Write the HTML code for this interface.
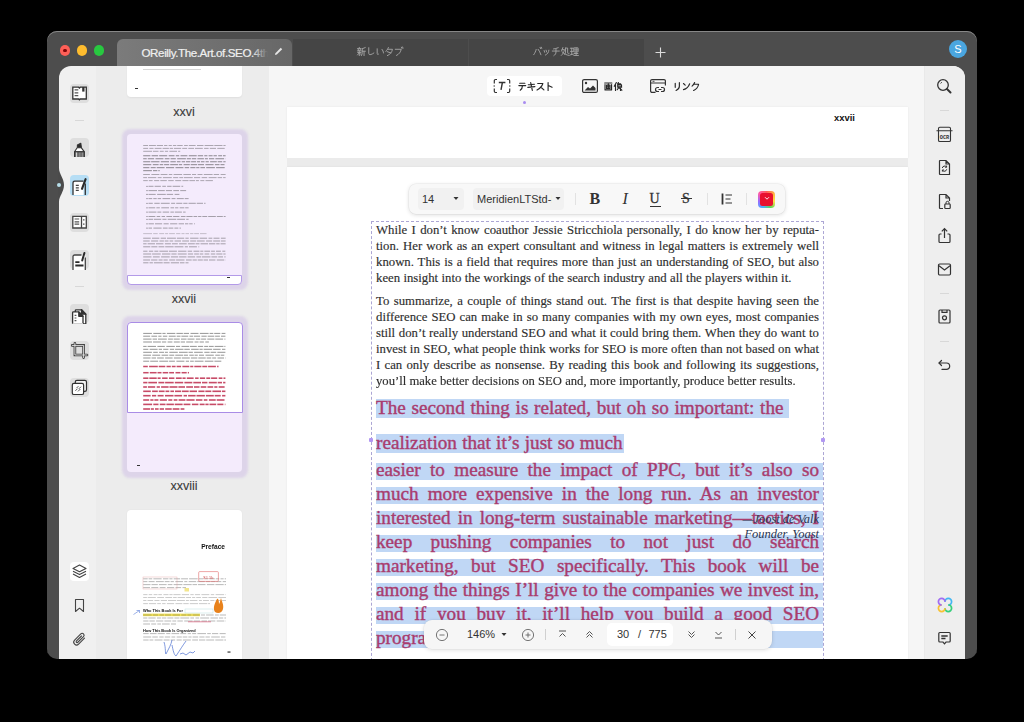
<!DOCTYPE html>
<html><head><meta charset="utf-8">
<style>
*{margin:0;padding:0;box-sizing:border-box}
html,body{width:1024px;height:722px;background:#000;overflow:hidden;font-family:"Liberation Sans",sans-serif}
.a{position:absolute}
#win{left:47px;top:31px;width:930px;height:628px;border-radius:10px;background:#4d4d4d;box-shadow:inset 0 1px 0 #878787;overflow:hidden}
.tl{width:10.6px;height:10.6px;border-radius:50%;top:45.3px}
.tab{top:39px;height:27px;border-radius:6px 6px 0 0;color:#a0a0a0;font-size:10px;text-align:center;line-height:26px}
#content{left:59px;top:66px;width:906px;height:593px;border-radius:12px 12px 0 0;background:#f0f0f0;overflow:hidden}
#thumbs{left:96px;top:66px;width:173px;height:593px;background:#ececec}
#main{left:269px;top:66px;width:656px;height:593px;background:#f6f6f6}
#rbar{left:925px;top:66px;width:40px;height:593px;background:#eeeeee;border-radius:0 12px 0 0;box-shadow:-1px 0 0 #e9e9e9}
.ib{width:19px;height:19px;border-radius:4px;background:#dedede;left:70px}
.sep{height:1px;background:#d8d8d8}
.page{background:#fff}
.lbl{color:#3a3a3a;font-size:12px;text-align:center;width:120px;left:124px;-webkit-text-stroke:0.1px #3a3a3a}
.tt{font-family:"Liberation Serif",serif;font-size:12.75px;color:#2e2e2e;-webkit-text-stroke:0.15px #2e2e2e;left:376px;width:443px;height:16px;line-height:16px;white-space:nowrap;text-align:justify;text-align-last:justify}
.tl2{text-align-last:left}
.hl{font-family:"Liberation Serif",serif;color:#a93c6e;-webkit-text-stroke:0.4px #a93c6e;left:376px;white-space:nowrap}
.hb{background:#c0d7f5;left:376px}
</style></head><body>
<div id="win" class="a"></div>
<div class="a tl" style="left:59.6px;background:#fe5f57"></div>
<div class="a" style="left:63px;top:48.7px;width:3.8px;height:3.8px;border-radius:50%;background:#7e0508"></div>
<div class="a tl" style="left:76.6px;background:#febc2e"></div>
<div class="a tl" style="left:93.6px;background:#28c840"></div>

<div class="a tab" style="left:117px;width:175px;background:linear-gradient(90deg,#7b7b7b,#676767);color:#f0f0f0;-webkit-text-stroke:0.2px #f0f0f0;font-size:11.6px;letter-spacing:-0.4px;text-align:left;padding-left:24.5px;line-height:27px">OReilly.The.Art.of.SEO.4th</div>
<div class="a" style="left:252px;top:42px;width:20px;height:20px;background:linear-gradient(90deg,rgba(106,106,106,0),#6a6a6a 80%)"></div>
<svg class="a" style="left:273px;top:46px" width="11" height="11" viewBox="0 0 11 11"><path d="M2 9 2.4 7.2 7.8 1.8 9.2 3.2 3.8 8.6Z" fill="#e6e6e6"/></svg>
<div class="a tab" style="left:293px;width:175px;background:#454545;border-radius:0"></div><svg class="a" style="left:356.0px;top:45.2px" width="48.5" height="12.8" fill="none" stroke="#a2a2a2" stroke-width="1.08" stroke-linecap="round" stroke-linejoin="round"><path transform="translate(1.00 2) scale(0.880)" d="M2.6 0.4V1.6M0.6 1.8H4.6M1.4 2.6L1.8 4M3.8 2.6L3.4 4M0.4 4.4H4.8M0.8 6.2H4.6M2.6 4.4V9.8M2.6 6.6L0.6 9M2.6 6.6L4.6 8.6M9.4 0.6L6 2M6 2V6.2C6 7.6 5.6 8.8 5 9.8M6 4.8H9.6M8 4.8V9.8"/><path transform="translate(10.30 2) scale(0.880)" d="M2.8 0.8V7.2C2.8 9.2 5 9.4 8.6 6.8"/><path transform="translate(19.60 2) scale(0.880)" d="M1.8 2V7.2C1.8 8.6 2.6 9 3.4 8M7.2 2.6C8.2 3.8 8.8 5.2 9 6.8"/><path transform="translate(28.90 2) scale(0.880)" d="M4 0.6C3.4 2.2 2.4 3.6 1 4.8M3.2 2.6H8.6C8 6 6 8.4 2.8 9.8M2.4 5.2L6.8 6.8"/><path transform="translate(38.20 2) scale(0.880)" d="M1.2 2.6H8C7.4 5.6 5.6 8.2 2.6 9.6M8.2 0.2L8.8 1.6M9.6 0L10 1.4"/></svg>
<div class="a tab" style="left:469px;width:175px;background:#454545;border-radius:0"></div><svg class="a" style="left:532.0px;top:45.4px" width="48.0" height="12.8" fill="none" stroke="#a2a2a2" stroke-width="1.08" stroke-linecap="round" stroke-linejoin="round"><path transform="translate(1.00 2) scale(0.880)" d="M3.6 2.8C3 5 2.2 7 0.8 8.8M5.8 2.6C7.2 4.4 8.2 6.4 9 8.8M8 0.4L8.6 1.8M9.4 0.2L9.9 1.6"/><path transform="translate(10.20 2) scale(0.880)" d="M2.2 4L2.8 6M4.4 3.6L5 5.6M7.6 3.6C7.4 6.2 6 8 3.6 9.2"/><path transform="translate(19.40 2) scale(0.880)" d="M7.8 0.8C6 1.6 4 2 2.4 2.2M1 4.6H9M5.2 2.2V5.6C5.2 7.6 4.4 8.8 2.8 9.8"/><path transform="translate(28.60 2) scale(0.880)" d="M2.6 0.6L1 4.6M1.8 3H4.4C3.8 5.8 2.6 8 0.8 9.6M1.8 5.6C3.8 7.8 6.6 9.2 9.8 9.6M5.6 1.2V5.8C5.6 7 5.2 7.8 4.6 8.4M5.6 1.2H8V6.6C8 7.2 8.4 7.4 9.6 7.2"/><path transform="translate(37.80 2) scale(0.880)" d="M0.6 1.4H4M0.8 5H3.8M2.2 1.4V8.4M0.4 9L4.2 8M5 1H9.4V5.6H5ZM5 3.3H9.4M7.2 1V9.4M5.2 7.4H9.2M4.6 9.6H9.8"/></svg>
<svg class="a" style="left:655px;top:47px" width="11" height="11"><path d="M5.5 0.5V10.5M0.5 5.5H10.5" stroke="#dcdcdc" stroke-width="1.1"/></svg>
<div class="a" style="left:949px;top:40px;width:18px;height:18px;border-radius:50%;background:#4aa6e0;color:#fff;font-size:11px;text-align:center;line-height:18px">S</div>

<div id="content" class="a"></div>
<div id="thumbs" class="a"></div>
<div id="main" class="a"></div>
<div id="rbar" class="a"></div>


<!-- left bar -->
<svg class="a" style="left:58px;top:168px" width="8" height="34" viewBox="0 0 8 34"><path d="M0 0H1C1 6 6 10 6 17C6 24 1 28 1 34H0Z" fill="#4b4b4b"/></svg>
<div class="a" style="left:56.5px;top:182.5px;width:4px;height:4px;border-radius:50%;background:#b6dde9"></div>
<div class="a ib" style="top:83.5px"></div>
<div class="a sep" style="left:75px;top:120px;width:9px"></div>
<div class="a ib" style="top:137.5px"></div>
<div class="a ib" style="top:174.5px;height:21px;background:#b6def5"></div>
<div class="a ib" style="top:212.5px"></div>
<div class="a ib" style="top:249.5px"></div>
<div class="a sep" style="left:75px;top:285.5px;width:9px"></div>
<div class="a ib" style="top:303.5px"></div>
<div class="a ib" style="top:341px"></div>
<div class="a ib" style="top:378px"></div>
<div class="a ib" style="top:562px;background:#fff"></div>

<svg class="a" style="left:70px;top:83.5px" width="19" height="19" viewBox="0 0 19 19" fill="none" stroke="#333" stroke-width="1.3">
<path d="M2.8 3.2H8.6L9.4 4 10.2 3.2H16.3V15H10.2L9.4 15.8 8.6 15H2.8Z" fill="#fff"/>
<path d="M4.6 5.9H8.3M4.6 8.9H8.3M4.6 11.6H8.3" stroke="#555" stroke-width="1.3"/><rect x="12.2" y="3" width="2.3" height="4.6" fill="#333" stroke="none"/></svg>
<svg class="a" style="left:70px;top:137.5px" width="19" height="19" viewBox="0 0 19 19" fill="none" stroke="#333" stroke-width="1.1" stroke-linejoin="round">
<path d="M7.4 6.9 10.8 5.2 11.4 9.6H7.4Z" fill="#2a2a2a"/><path d="M7.2 9.8H11.4L14.4 13.8H4.5Z" fill="#fff"/>
<path d="M4.5 13.8H14.4V19.5H4.5Z" fill="#6a6a6a" stroke="none"/><path d="M6.6 14.2V19.5" stroke="#ddd" stroke-width="1"/><path d="M9.8 14.2V19.5M12.4 14.2V19.5" stroke="#999" stroke-width="0.8"/><path d="M4.5 19.5V13.8H14.4V19.5" stroke-width="1"/></svg>
<svg class="a" style="left:70px;top:175px" width="19" height="20" viewBox="0 0 19 20" fill="none" stroke="#333" stroke-width="1.3">
<path d="M3 20V7.8A1.6 1.6 0 0 1 4.6 6.2H13.5V20Z" fill="#fff" stroke="none"/><path d="M3 20V7.8A1.6 1.6 0 0 1 4.6 6.2H13.5M15.3 8.5V20"/>
<path d="M5.8 10.3H8.8M5.8 12.8H8.8M5.8 15.4H8.8" stroke="#444" stroke-width="1.2"/><path d="M15.6 4.2 12 13.8" stroke="#2a2a2a" stroke-width="2.1" stroke-linecap="round"/></svg>
<svg class="a" style="left:70px;top:212.5px" width="19" height="19" viewBox="0 0 19 19" fill="none" stroke="#444" stroke-width="1.3">
<path d="M2.8 3.3H16.3V15H2.8Z" fill="#fff"/><path d="M11.5 3.3V15"/><path d="M4.6 6H9.2M4.6 8.8H9.2M4.6 11.2H9.2M13 6.9H14.5M13 11.1H14.5" stroke="#555" stroke-width="1.2"/></svg>
<svg class="a" style="left:70px;top:249.5px" width="19" height="20" viewBox="0 0 19 20" fill="none" stroke="#444" stroke-width="1.3">
<path d="M3 20V6.6A1.6 1.6 0 0 1 4.6 5H15.3V20Z" fill="#fff" stroke="none"/><path d="M3 20V6.6A1.6 1.6 0 0 1 4.6 5H11.5M15.3 7.5V20"/>
<path d="M5.3 12.2H9.5M5.3 15.5H13.5" stroke="#2a2a2a" stroke-width="1.8"/><path d="M14.4 3 12.2 10.5" stroke="#2a2a2a" stroke-width="2" stroke-linecap="round"/></svg>
<svg class="a" style="left:70px;top:303.5px" width="19" height="20" viewBox="0 0 19 20" fill="none" stroke="#333" stroke-width="1.3" stroke-linejoin="round">
<path d="M5.3 8V6.6A0.8 0.8 0 0 1 6.1 5.8H11.5L15.8 10.2V20H5.3Z" fill="#fff"/><path d="M11.5 5.8V10.2H15.8Z" fill="#333"/>
<path d="M2.6 20V8.7A0.8 0.8 0 0 1 3.4 7.9H8.8L13 12.3V20Z" fill="#fff"/><path d="M8.8 7.9V12.3H13Z" fill="#333"/><path d="M2.6 20H13" stroke="#fff" stroke-width="1.4"/>
<path d="M4.6 11.4H6.4M4.6 14H6.4M4.6 16.6H6.4" stroke="#555" stroke-width="1.1"/></svg>
<svg class="a" style="left:70px;top:341px" width="19" height="19" viewBox="0 0 19 19" fill="none" stroke-linecap="round">
<path d="M4.9 2.2V14H17M2.2 4.4H13.6V16.6" stroke="#3a3a3a" stroke-width="2.6"/><path d="M4.9 2.2V14H17M2.2 4.4H13.6V16.6" stroke="#e8e8e8" stroke-width="0.9"/></svg>
<svg class="a" style="left:70px;top:378px" width="19" height="19" viewBox="0 0 19 19" fill="none" stroke="#333" stroke-width="1.2">
<rect x="5.3" y="2.3" width="11.2" height="11" rx="1.6" fill="#f4f4f4"/><rect x="2.3" y="5.4" width="11.3" height="11.1" rx="1.6" fill="#fff"/>
<path d="M5.4 12.8 7.5 10.7M6.4 10.2 8.4 8.2M8 13.4 10.4 11M8.9 10.8 11 8.7" stroke="#555" stroke-width="1"/></svg>
<svg class="a" style="left:70px;top:562px" width="19" height="19" viewBox="0 0 19 19" fill="none" stroke="#444" stroke-width="1.1" stroke-linejoin="round">
<path d="M9.5 3 16 6.4 9.5 9.8 3 6.4Z"/><path d="M3 9.2 9.5 12.6 16 9.2"/><path d="M3 12 9.5 15.4 16 12"/></svg>
<svg class="a" style="left:70px;top:595.5px" width="19" height="19" viewBox="0 0 19 19" fill="none" stroke="#444" stroke-width="1.1" stroke-linejoin="round">
<path d="M5.5 3.5H13.5V15.5L9.5 12.2 5.5 15.5Z"/></svg>
<svg class="a" style="left:70px;top:630px" width="19" height="19" viewBox="0 0 19 19" fill="none" stroke="#444" stroke-width="1.1" stroke-linecap="round">
<path d="M14.5 8.2 8.6 14.1A2.8 2.8 0 0 1 4.6 10.1L10.8 3.9A1.9 1.9 0 0 1 13.5 6.6L7.6 12.5A0.95 0.95 0 0 1 6.3 11.2L11.5 6"/></svg>

<!-- thumbnails -->
<div class="a page" style="left:127px;top:66px;width:115px;height:31px;border-radius:0 0 4px 4px;box-shadow:0 1px 2px rgba(0,0,0,0.06)"></div>
<div class="a" style="left:143px;top:69px;width:58px;height:1px;background:#999;opacity:.4"></div>
<div class="a" style="left:134.5px;top:88px;width:3px;height:1.2px;background:#333"></div>
<div class="a lbl" style="top:105px;font-size:12.5px">xxvi</div>

<div class="a" style="left:121.5px;top:128.5px;width:126px;height:161px;border-radius:8px;background:#ddd4e9;filter:blur(1px)"></div>
<div class="a" style="left:127px;top:134px;width:115px;height:150px;border-radius:4px;background:#f4ebfc"></div>
<div class="a" style="left:127px;top:274.5px;width:115px;height:10px;border-radius:0 0 4px 4px;background:#fff;border:1.5px solid #b39ae8"></div>
<div class="a" style="left:227px;top:276.5px;width:3px;height:1.2px;background:#333"></div>
<div class="a lbl" style="top:292px;font-size:12.5px">xxvii</div>

<div class="a" style="left:121.5px;top:316px;width:126px;height:161.5px;border-radius:8px;background:#ddd4e9;filter:blur(1px)"></div>
<div class="a" style="left:127px;top:321.5px;width:115px;height:150.5px;border-radius:4px;background:#f4ebfc"></div>
<div class="a" style="left:126.5px;top:321.5px;width:116px;height:91.5px;border-radius:4px 4px 0 0;background:#fff;border:1.5px solid #a98ce6"></div>
<div class="a" style="left:136.5px;top:464.5px;width:3px;height:1.2px;background:#333"></div>
<div class="a lbl" style="top:479px;font-size:12.5px">xxviii</div>

<div class="a page" style="left:126.5px;top:510px;width:115px;height:149px;border-radius:4px 4px 0 0;box-shadow:0 0 2px rgba(0,0,0,0.05)"></div>
<svg class="a" style="left:0;top:0;clip-path:inset(66px 0 63px 0);filter:blur(0.4px)" width="1024" height="722"><rect x="143.2" y="145.00" width="4.9" height="1.0" fill="#444" opacity="0.41250000000000003"/><rect x="149.0" y="145.00" width="6.9" height="1.0" fill="#444" opacity="0.41250000000000003"/><rect x="156.8" y="145.00" width="6.2" height="1.0" fill="#444" opacity="0.41250000000000003"/><rect x="164.1" y="145.00" width="3.3" height="1.0" fill="#444" opacity="0.41250000000000003"/><rect x="168.6" y="145.00" width="3.2" height="1.0" fill="#444" opacity="0.41250000000000003"/><rect x="172.9" y="145.00" width="3.4" height="1.0" fill="#444" opacity="0.41250000000000003"/><rect x="177.2" y="145.00" width="5.5" height="1.0" fill="#444" opacity="0.41250000000000003"/><rect x="184.1" y="145.00" width="3.7" height="1.0" fill="#444" opacity="0.41250000000000003"/><rect x="188.8" y="145.00" width="6.8" height="1.0" fill="#444" opacity="0.41250000000000003"/><rect x="197.0" y="145.00" width="6.5" height="1.0" fill="#444" opacity="0.41250000000000003"/><rect x="204.6" y="145.00" width="8.9" height="1.0" fill="#444" opacity="0.41250000000000003"/><rect x="214.3" y="145.00" width="8.2" height="1.0" fill="#444" opacity="0.41250000000000003"/><rect x="223.4" y="145.00" width="2.2" height="1.0" fill="#444" opacity="0.41250000000000003"/><rect x="143.2" y="147.90" width="4.9" height="1.0" fill="#444" opacity="0.41250000000000003"/><rect x="149.4" y="147.90" width="4.1" height="1.0" fill="#444" opacity="0.41250000000000003"/><rect x="154.7" y="147.90" width="6.8" height="1.0" fill="#444" opacity="0.41250000000000003"/><rect x="162.6" y="147.90" width="6.3" height="1.0" fill="#444" opacity="0.41250000000000003"/><rect x="169.7" y="147.90" width="3.4" height="1.0" fill="#444" opacity="0.41250000000000003"/><rect x="174.0" y="147.90" width="7.1" height="1.0" fill="#444" opacity="0.41250000000000003"/><rect x="182.2" y="147.90" width="4.9" height="1.0" fill="#444" opacity="0.41250000000000003"/><rect x="188.3" y="147.90" width="5.7" height="1.0" fill="#444" opacity="0.41250000000000003"/><rect x="195.0" y="147.90" width="7.8" height="1.0" fill="#444" opacity="0.41250000000000003"/><rect x="204.1" y="147.90" width="4.5" height="1.0" fill="#444" opacity="0.41250000000000003"/><rect x="209.8" y="147.90" width="6.2" height="1.0" fill="#444" opacity="0.41250000000000003"/><rect x="217.3" y="147.90" width="7.4" height="1.0" fill="#444" opacity="0.41250000000000003"/><rect x="143.2" y="150.80" width="8.9" height="1.0" fill="#444" opacity="0.41250000000000003"/><rect x="153.0" y="150.80" width="5.5" height="1.0" fill="#444" opacity="0.41250000000000003"/><rect x="159.8" y="150.80" width="3.9" height="1.0" fill="#444" opacity="0.41250000000000003"/><rect x="164.9" y="150.80" width="3.2" height="1.0" fill="#444" opacity="0.41250000000000003"/><rect x="169.4" y="150.80" width="7.6" height="1.0" fill="#444" opacity="0.41250000000000003"/><rect x="178.1" y="150.80" width="2.1" height="1.0" fill="#444" opacity="0.41250000000000003"/><rect x="143.2" y="155.10" width="7.2" height="1.2" fill="#333" opacity="0.44999999999999996"/><rect x="151.6" y="155.10" width="6.5" height="1.2" fill="#333" opacity="0.44999999999999996"/><rect x="159.2" y="155.10" width="8.0" height="1.2" fill="#333" opacity="0.44999999999999996"/><rect x="168.7" y="155.10" width="5.8" height="1.2" fill="#333" opacity="0.44999999999999996"/><rect x="175.8" y="155.10" width="3.4" height="1.2" fill="#333" opacity="0.44999999999999996"/><rect x="180.5" y="155.10" width="6.9" height="1.2" fill="#333" opacity="0.44999999999999996"/><rect x="188.8" y="155.10" width="7.9" height="1.2" fill="#333" opacity="0.44999999999999996"/><rect x="197.8" y="155.10" width="5.3" height="1.2" fill="#333" opacity="0.44999999999999996"/><rect x="204.3" y="155.10" width="3.1" height="1.2" fill="#333" opacity="0.44999999999999996"/><rect x="208.6" y="155.10" width="4.0" height="1.2" fill="#333" opacity="0.44999999999999996"/><rect x="213.5" y="155.10" width="3.4" height="1.2" fill="#333" opacity="0.44999999999999996"/><rect x="218.2" y="155.10" width="3.8" height="1.2" fill="#333" opacity="0.44999999999999996"/><rect x="222.9" y="155.10" width="2.7" height="1.2" fill="#333" opacity="0.44999999999999996"/><rect x="143.2" y="158.10" width="3.5" height="1.2" fill="#333" opacity="0.44999999999999996"/><rect x="147.8" y="158.10" width="6.3" height="1.2" fill="#333" opacity="0.44999999999999996"/><rect x="155.5" y="158.10" width="7.9" height="1.2" fill="#333" opacity="0.44999999999999996"/><rect x="164.8" y="158.10" width="4.7" height="1.2" fill="#333" opacity="0.44999999999999996"/><rect x="170.6" y="158.10" width="5.2" height="1.2" fill="#333" opacity="0.44999999999999996"/><rect x="177.2" y="158.10" width="8.7" height="1.2" fill="#333" opacity="0.44999999999999996"/><rect x="186.8" y="158.10" width="4.1" height="1.2" fill="#333" opacity="0.44999999999999996"/><rect x="191.8" y="158.10" width="4.4" height="1.2" fill="#333" opacity="0.44999999999999996"/><rect x="197.4" y="158.10" width="6.5" height="1.2" fill="#333" opacity="0.44999999999999996"/><rect x="204.9" y="158.10" width="3.0" height="1.2" fill="#333" opacity="0.44999999999999996"/><rect x="209.0" y="158.10" width="5.2" height="1.2" fill="#333" opacity="0.44999999999999996"/><rect x="215.4" y="158.10" width="8.7" height="1.2" fill="#333" opacity="0.44999999999999996"/><rect x="225.4" y="158.10" width="0.2" height="1.2" fill="#333" opacity="0.44999999999999996"/><rect x="143.2" y="161.10" width="7.1" height="1.2" fill="#333" opacity="0.44999999999999996"/><rect x="151.1" y="161.10" width="8.4" height="1.2" fill="#333" opacity="0.44999999999999996"/><rect x="160.8" y="161.10" width="8.2" height="1.2" fill="#333" opacity="0.44999999999999996"/><rect x="170.4" y="161.10" width="5.4" height="1.2" fill="#333" opacity="0.44999999999999996"/><rect x="176.9" y="161.10" width="3.6" height="1.2" fill="#333" opacity="0.44999999999999996"/><rect x="181.7" y="161.10" width="3.4" height="1.2" fill="#333" opacity="0.44999999999999996"/><rect x="186.0" y="161.10" width="4.3" height="1.2" fill="#333" opacity="0.44999999999999996"/><rect x="191.1" y="161.10" width="5.0" height="1.2" fill="#333" opacity="0.44999999999999996"/><rect x="197.0" y="161.10" width="3.0" height="1.2" fill="#333" opacity="0.44999999999999996"/><rect x="200.9" y="161.10" width="3.6" height="1.2" fill="#333" opacity="0.44999999999999996"/><rect x="205.6" y="161.10" width="3.2" height="1.2" fill="#333" opacity="0.44999999999999996"/><rect x="210.1" y="161.10" width="6.7" height="1.2" fill="#333" opacity="0.44999999999999996"/><rect x="217.7" y="161.10" width="4.5" height="1.2" fill="#333" opacity="0.44999999999999996"/><rect x="223.3" y="161.10" width="2.3" height="1.2" fill="#333" opacity="0.44999999999999996"/><rect x="143.2" y="164.00" width="8.1" height="1.2" fill="#333" opacity="0.44999999999999996"/><rect x="152.8" y="164.00" width="5.8" height="1.2" fill="#333" opacity="0.44999999999999996"/><rect x="159.7" y="164.00" width="3.5" height="1.2" fill="#333" opacity="0.44999999999999996"/><rect x="164.1" y="164.00" width="5.1" height="1.2" fill="#333" opacity="0.44999999999999996"/><rect x="170.2" y="164.00" width="8.0" height="1.2" fill="#333" opacity="0.44999999999999996"/><rect x="179.0" y="164.00" width="3.1" height="1.2" fill="#333" opacity="0.44999999999999996"/><rect x="183.6" y="164.00" width="6.2" height="1.2" fill="#333" opacity="0.44999999999999996"/><rect x="190.7" y="164.00" width="6.3" height="1.2" fill="#333" opacity="0.44999999999999996"/><rect x="197.8" y="164.00" width="6.2" height="1.2" fill="#333" opacity="0.44999999999999996"/><rect x="205.4" y="164.00" width="8.2" height="1.2" fill="#333" opacity="0.44999999999999996"/><rect x="214.9" y="164.00" width="4.6" height="1.2" fill="#333" opacity="0.44999999999999996"/><rect x="220.5" y="164.00" width="4.0" height="1.2" fill="#333" opacity="0.44999999999999996"/><rect x="143.2" y="167.00" width="6.2" height="1.2" fill="#333" opacity="0.44999999999999996"/><rect x="150.7" y="167.00" width="5.0" height="1.2" fill="#333" opacity="0.44999999999999996"/><rect x="156.7" y="167.00" width="7.9" height="1.2" fill="#333" opacity="0.44999999999999996"/><rect x="166.0" y="167.00" width="8.1" height="1.2" fill="#333" opacity="0.44999999999999996"/><rect x="175.5" y="167.00" width="7.9" height="1.2" fill="#333" opacity="0.44999999999999996"/><rect x="184.7" y="167.00" width="4.4" height="1.2" fill="#333" opacity="0.44999999999999996"/><rect x="190.3" y="167.00" width="5.1" height="1.2" fill="#333" opacity="0.44999999999999996"/><rect x="196.2" y="167.00" width="3.2" height="1.2" fill="#333" opacity="0.44999999999999996"/><rect x="200.4" y="167.00" width="4.6" height="1.2" fill="#333" opacity="0.44999999999999996"/><rect x="206.2" y="167.00" width="8.7" height="1.2" fill="#333" opacity="0.44999999999999996"/><rect x="216.1" y="167.00" width="8.6" height="1.2" fill="#333" opacity="0.44999999999999996"/><rect x="143.2" y="170.00" width="8.7" height="1.2" fill="#333" opacity="0.44999999999999996"/><rect x="153.0" y="170.00" width="4.3" height="1.2" fill="#333" opacity="0.44999999999999996"/><rect x="158.3" y="170.00" width="1.4" height="1.2" fill="#333" opacity="0.44999999999999996"/><rect x="143.2" y="174.00" width="6.7" height="1.0" fill="#444" opacity="0.41250000000000003"/><rect x="151.4" y="174.00" width="8.0" height="1.0" fill="#444" opacity="0.41250000000000003"/><rect x="160.6" y="174.00" width="6.9" height="1.0" fill="#444" opacity="0.41250000000000003"/><rect x="168.8" y="174.00" width="3.5" height="1.0" fill="#444" opacity="0.41250000000000003"/><rect x="173.6" y="174.00" width="8.5" height="1.0" fill="#444" opacity="0.41250000000000003"/><rect x="183.4" y="174.00" width="7.5" height="1.0" fill="#444" opacity="0.41250000000000003"/><rect x="192.0" y="174.00" width="4.1" height="1.0" fill="#444" opacity="0.41250000000000003"/><rect x="197.5" y="174.00" width="5.0" height="1.0" fill="#444" opacity="0.41250000000000003"/><rect x="203.8" y="174.00" width="8.8" height="1.0" fill="#444" opacity="0.41250000000000003"/><rect x="213.7" y="174.00" width="5.4" height="1.0" fill="#444" opacity="0.41250000000000003"/><rect x="220.6" y="174.00" width="5.0" height="1.0" fill="#444" opacity="0.41250000000000003"/><rect x="143.2" y="177.10" width="3.8" height="1.0" fill="#444" opacity="0.41250000000000003"/><rect x="147.9" y="177.10" width="8.4" height="1.0" fill="#444" opacity="0.41250000000000003"/><rect x="157.7" y="177.10" width="3.9" height="1.0" fill="#444" opacity="0.41250000000000003"/><rect x="162.9" y="177.10" width="8.9" height="1.0" fill="#444" opacity="0.41250000000000003"/><rect x="173.1" y="177.10" width="5.1" height="1.0" fill="#444" opacity="0.41250000000000003"/><rect x="179.3" y="177.10" width="3.8" height="1.0" fill="#444" opacity="0.41250000000000003"/><rect x="183.9" y="177.10" width="8.8" height="1.0" fill="#444" opacity="0.41250000000000003"/><rect x="194.0" y="177.10" width="6.2" height="1.0" fill="#444" opacity="0.41250000000000003"/><rect x="201.6" y="177.10" width="5.6" height="1.0" fill="#444" opacity="0.41250000000000003"/><rect x="208.6" y="177.10" width="8.0" height="1.0" fill="#444" opacity="0.41250000000000003"/><rect x="217.6" y="177.10" width="4.5" height="1.0" fill="#444" opacity="0.41250000000000003"/><rect x="223.1" y="177.10" width="2.5" height="1.0" fill="#444" opacity="0.41250000000000003"/><rect x="143.2" y="180.10" width="4.6" height="1.0" fill="#444" opacity="0.41250000000000003"/><rect x="148.8" y="180.10" width="3.8" height="1.0" fill="#444" opacity="0.41250000000000003"/><rect x="154.1" y="180.10" width="5.1" height="1.0" fill="#444" opacity="0.41250000000000003"/><rect x="160.3" y="180.10" width="6.5" height="1.0" fill="#444" opacity="0.41250000000000003"/><rect x="168.2" y="180.10" width="5.5" height="1.0" fill="#444" opacity="0.41250000000000003"/><rect x="175.2" y="180.10" width="6.0" height="1.0" fill="#444" opacity="0.41250000000000003"/><rect x="182.4" y="180.10" width="6.1" height="1.0" fill="#444" opacity="0.41250000000000003"/><rect x="189.4" y="180.10" width="5.6" height="1.0" fill="#444" opacity="0.41250000000000003"/><rect x="195.9" y="180.10" width="3.0" height="1.0" fill="#444" opacity="0.41250000000000003"/><rect x="200.3" y="180.10" width="4.0" height="1.0" fill="#444" opacity="0.41250000000000003"/><rect x="205.5" y="180.10" width="7.4" height="1.0" fill="#444" opacity="0.41250000000000003"/><circle cx="147" cy="186.3" r="0.6" fill="#333" opacity="0.7"/><rect x="148.5" y="185.80" width="5.0" height="1.0" fill="#333" opacity="0.41250000000000003"/><rect x="154.6" y="185.80" width="6.3" height="1.0" fill="#333" opacity="0.41250000000000003"/><rect x="162.3" y="185.80" width="3.6" height="1.0" fill="#333" opacity="0.41250000000000003"/><rect x="167.1" y="185.80" width="4.5" height="1.0" fill="#333" opacity="0.41250000000000003"/><rect x="172.6" y="185.80" width="7.6" height="1.0" fill="#333" opacity="0.41250000000000003"/><rect x="181.4" y="185.80" width="1.8" height="1.0" fill="#333" opacity="0.41250000000000003"/><circle cx="147" cy="190.6" r="0.6" fill="#333" opacity="0.7"/><rect x="148.5" y="190.10" width="8.5" height="1.0" fill="#333" opacity="0.41250000000000003"/><rect x="158.1" y="190.10" width="6.7" height="1.0" fill="#333" opacity="0.41250000000000003"/><rect x="165.9" y="190.10" width="6.1" height="1.0" fill="#333" opacity="0.41250000000000003"/><rect x="173.3" y="190.10" width="5.7" height="1.0" fill="#333" opacity="0.41250000000000003"/><rect x="180.2" y="190.10" width="5.9" height="1.0" fill="#333" opacity="0.41250000000000003"/><circle cx="147" cy="194.4" r="0.6" fill="#333" opacity="0.7"/><rect x="148.5" y="193.90" width="7.2" height="1.0" fill="#333" opacity="0.41250000000000003"/><rect x="157.1" y="193.90" width="8.7" height="1.0" fill="#333" opacity="0.41250000000000003"/><rect x="166.7" y="193.90" width="6.4" height="1.0" fill="#333" opacity="0.41250000000000003"/><rect x="174.6" y="193.90" width="4.8" height="1.0" fill="#333" opacity="0.41250000000000003"/><circle cx="147" cy="198.6" r="0.6" fill="#333" opacity="0.7"/><rect x="148.5" y="198.10" width="3.7" height="1.0" fill="#333" opacity="0.41250000000000003"/><rect x="153.3" y="198.10" width="3.4" height="1.0" fill="#333" opacity="0.41250000000000003"/><rect x="157.7" y="198.10" width="3.4" height="1.0" fill="#333" opacity="0.41250000000000003"/><rect x="162.5" y="198.10" width="7.7" height="1.0" fill="#333" opacity="0.41250000000000003"/><rect x="171.6" y="198.10" width="3.9" height="1.0" fill="#333" opacity="0.41250000000000003"/><rect x="176.8" y="198.10" width="7.0" height="1.0" fill="#333" opacity="0.41250000000000003"/><rect x="184.7" y="198.10" width="3.9" height="1.0" fill="#333" opacity="0.41250000000000003"/><circle cx="147" cy="203.3" r="0.6" fill="#333" opacity="0.7"/><rect x="148.5" y="202.80" width="4.3" height="1.0" fill="#333" opacity="0.41250000000000003"/><rect x="154.3" y="202.80" width="5.4" height="1.0" fill="#333" opacity="0.41250000000000003"/><rect x="160.8" y="202.80" width="8.9" height="1.0" fill="#333" opacity="0.41250000000000003"/><rect x="171.1" y="202.80" width="4.0" height="1.0" fill="#333" opacity="0.41250000000000003"/><rect x="176.2" y="202.80" width="6.1" height="1.0" fill="#333" opacity="0.41250000000000003"/><rect x="183.3" y="202.80" width="4.2" height="1.0" fill="#333" opacity="0.41250000000000003"/><rect x="188.5" y="202.80" width="7.3" height="1.0" fill="#333" opacity="0.41250000000000003"/><rect x="196.7" y="202.80" width="6.3" height="1.0" fill="#333" opacity="0.41250000000000003"/><rect x="204.1" y="202.80" width="1.4" height="1.0" fill="#333" opacity="0.41250000000000003"/><circle cx="147" cy="207.8" r="0.6" fill="#333" opacity="0.7"/><rect x="148.5" y="207.30" width="6.7" height="1.0" fill="#333" opacity="0.41250000000000003"/><rect x="156.4" y="207.30" width="3.4" height="1.0" fill="#333" opacity="0.41250000000000003"/><rect x="161.3" y="207.30" width="7.7" height="1.0" fill="#333" opacity="0.41250000000000003"/><rect x="170.5" y="207.30" width="3.6" height="1.0" fill="#333" opacity="0.41250000000000003"/><rect x="175.1" y="207.30" width="3.2" height="1.0" fill="#333" opacity="0.41250000000000003"/><rect x="179.7" y="207.30" width="4.6" height="1.0" fill="#333" opacity="0.41250000000000003"/><rect x="185.2" y="207.30" width="3.4" height="1.0" fill="#333" opacity="0.41250000000000003"/><circle cx="147" cy="212.1" r="0.6" fill="#333" opacity="0.7"/><rect x="148.5" y="211.60" width="7.9" height="1.0" fill="#333" opacity="0.41250000000000003"/><rect x="157.4" y="211.60" width="3.9" height="1.0" fill="#333" opacity="0.41250000000000003"/><rect x="162.7" y="211.60" width="6.4" height="1.0" fill="#333" opacity="0.41250000000000003"/><rect x="170.4" y="211.60" width="3.5" height="1.0" fill="#333" opacity="0.41250000000000003"/><rect x="174.8" y="211.60" width="7.1" height="1.0" fill="#333" opacity="0.41250000000000003"/><rect x="183.1" y="211.60" width="2.5" height="1.0" fill="#333" opacity="0.41250000000000003"/><circle cx="147" cy="216.5" r="0.6" fill="#333" opacity="0.7"/><rect x="148.5" y="216.00" width="6.8" height="1.0" fill="#333" opacity="0.41250000000000003"/><rect x="156.7" y="216.00" width="3.5" height="1.0" fill="#333" opacity="0.41250000000000003"/><rect x="161.6" y="216.00" width="3.4" height="1.0" fill="#333" opacity="0.41250000000000003"/><rect x="166.4" y="216.00" width="5.7" height="1.0" fill="#333" opacity="0.41250000000000003"/><rect x="173.1" y="216.00" width="6.3" height="1.0" fill="#333" opacity="0.41250000000000003"/><rect x="180.9" y="216.00" width="4.6" height="1.0" fill="#333" opacity="0.41250000000000003"/><rect x="186.4" y="216.00" width="6.2" height="1.0" fill="#333" opacity="0.41250000000000003"/><rect x="193.5" y="216.00" width="3.7" height="1.0" fill="#333" opacity="0.41250000000000003"/><rect x="198.1" y="216.00" width="3.3" height="1.0" fill="#333" opacity="0.41250000000000003"/><rect x="202.3" y="216.00" width="4.9" height="1.0" fill="#333" opacity="0.41250000000000003"/><rect x="208.2" y="216.00" width="7.6" height="1.0" fill="#333" opacity="0.41250000000000003"/><rect x="216.8" y="216.00" width="6.0" height="1.0" fill="#333" opacity="0.41250000000000003"/><rect x="223.7" y="216.00" width="1.9" height="1.0" fill="#333" opacity="0.41250000000000003"/><circle cx="147" cy="219.3" r="0.6" fill="#333" opacity="0.7"/><rect x="148.5" y="218.80" width="4.5" height="1.0" fill="#333" opacity="0.41250000000000003"/><rect x="153.8" y="218.80" width="7.4" height="1.0" fill="#333" opacity="0.41250000000000003"/><rect x="162.4" y="218.80" width="4.1" height="1.0" fill="#333" opacity="0.41250000000000003"/><rect x="167.7" y="218.80" width="8.6" height="1.0" fill="#333" opacity="0.41250000000000003"/><rect x="177.1" y="218.80" width="7.9" height="1.0" fill="#333" opacity="0.41250000000000003"/><rect x="186.2" y="218.80" width="2.4" height="1.0" fill="#333" opacity="0.41250000000000003"/><circle cx="147" cy="223.8" r="0.6" fill="#333" opacity="0.7"/><rect x="148.5" y="223.30" width="5.4" height="1.0" fill="#333" opacity="0.41250000000000003"/><rect x="155.0" y="223.30" width="7.1" height="1.0" fill="#333" opacity="0.41250000000000003"/><rect x="163.6" y="223.30" width="5.1" height="1.0" fill="#333" opacity="0.41250000000000003"/><rect x="170.1" y="223.30" width="7.2" height="1.0" fill="#333" opacity="0.41250000000000003"/><rect x="178.6" y="223.30" width="5.4" height="1.0" fill="#333" opacity="0.41250000000000003"/><rect x="185.0" y="223.30" width="3.3" height="1.0" fill="#333" opacity="0.41250000000000003"/><rect x="189.2" y="223.30" width="3.4" height="1.0" fill="#333" opacity="0.41250000000000003"/><rect x="194.0" y="223.30" width="0.8" height="1.0" fill="#333" opacity="0.41250000000000003"/><circle cx="147" cy="228.1" r="0.6" fill="#333" opacity="0.7"/><rect x="148.5" y="227.60" width="3.5" height="1.0" fill="#333" opacity="0.41250000000000003"/><rect x="153.4" y="227.60" width="8.2" height="1.0" fill="#333" opacity="0.41250000000000003"/><rect x="162.9" y="227.60" width="4.7" height="1.0" fill="#333" opacity="0.41250000000000003"/><rect x="168.5" y="227.60" width="4.8" height="1.0" fill="#333" opacity="0.41250000000000003"/><rect x="174.4" y="227.60" width="3.9" height="1.0" fill="#333" opacity="0.41250000000000003"/><rect x="179.5" y="227.60" width="1.4" height="1.0" fill="#333" opacity="0.41250000000000003"/><rect x="143.2" y="233.10" width="8.8" height="1.0" fill="#555" opacity="0.30000000000000004"/><rect x="153.2" y="233.10" width="4.5" height="1.0" fill="#555" opacity="0.30000000000000004"/><rect x="159.2" y="233.10" width="4.9" height="1.0" fill="#555" opacity="0.30000000000000004"/><rect x="165.1" y="233.10" width="3.0" height="1.0" fill="#555" opacity="0.30000000000000004"/><rect x="169.1" y="233.10" width="5.8" height="1.0" fill="#555" opacity="0.30000000000000004"/><rect x="176.1" y="233.10" width="4.2" height="1.0" fill="#555" opacity="0.30000000000000004"/><rect x="181.5" y="233.10" width="3.0" height="1.0" fill="#555" opacity="0.30000000000000004"/><rect x="185.5" y="233.10" width="3.5" height="1.0" fill="#555" opacity="0.30000000000000004"/><rect x="190.1" y="233.10" width="3.3" height="1.0" fill="#555" opacity="0.30000000000000004"/><rect x="194.2" y="233.10" width="4.8" height="1.0" fill="#555" opacity="0.30000000000000004"/><rect x="200.0" y="233.10" width="6.5" height="1.0" fill="#555" opacity="0.30000000000000004"/><rect x="143.2" y="237.70" width="7.5" height="1.0" fill="#333" opacity="0.41250000000000003"/><rect x="152.0" y="237.70" width="7.3" height="1.0" fill="#333" opacity="0.41250000000000003"/><rect x="160.7" y="237.70" width="5.3" height="1.0" fill="#333" opacity="0.41250000000000003"/><rect x="167.0" y="237.70" width="8.9" height="1.0" fill="#333" opacity="0.41250000000000003"/><rect x="176.9" y="237.70" width="7.3" height="1.0" fill="#333" opacity="0.41250000000000003"/><rect x="185.4" y="237.70" width="3.3" height="1.0" fill="#333" opacity="0.41250000000000003"/><rect x="190.1" y="237.70" width="8.4" height="1.0" fill="#333" opacity="0.41250000000000003"/><rect x="199.7" y="237.70" width="7.4" height="1.0" fill="#333" opacity="0.41250000000000003"/><rect x="208.5" y="237.70" width="3.8" height="1.0" fill="#333" opacity="0.41250000000000003"/><rect x="213.5" y="237.70" width="6.0" height="1.0" fill="#333" opacity="0.41250000000000003"/><rect x="220.9" y="237.70" width="4.7" height="1.0" fill="#333" opacity="0.41250000000000003"/><rect x="143.2" y="240.50" width="6.5" height="1.0" fill="#333" opacity="0.41250000000000003"/><rect x="151.1" y="240.50" width="7.1" height="1.0" fill="#333" opacity="0.41250000000000003"/><rect x="159.5" y="240.50" width="4.4" height="1.0" fill="#333" opacity="0.41250000000000003"/><rect x="164.7" y="240.50" width="3.8" height="1.0" fill="#333" opacity="0.41250000000000003"/><rect x="169.6" y="240.50" width="3.6" height="1.0" fill="#333" opacity="0.41250000000000003"/><rect x="174.6" y="240.50" width="6.4" height="1.0" fill="#333" opacity="0.41250000000000003"/><rect x="182.2" y="240.50" width="6.8" height="1.0" fill="#333" opacity="0.41250000000000003"/><rect x="190.2" y="240.50" width="5.9" height="1.0" fill="#333" opacity="0.41250000000000003"/><rect x="196.9" y="240.50" width="7.8" height="1.0" fill="#333" opacity="0.41250000000000003"/><rect x="206.1" y="240.50" width="6.0" height="1.0" fill="#333" opacity="0.41250000000000003"/><rect x="213.2" y="240.50" width="7.0" height="1.0" fill="#333" opacity="0.41250000000000003"/><rect x="221.0" y="240.50" width="4.6" height="1.0" fill="#333" opacity="0.41250000000000003"/><rect x="143.2" y="243.30" width="3.4" height="1.0" fill="#333" opacity="0.41250000000000003"/><rect x="147.6" y="243.30" width="7.4" height="1.0" fill="#333" opacity="0.41250000000000003"/><rect x="156.0" y="243.30" width="7.4" height="1.0" fill="#333" opacity="0.41250000000000003"/><rect x="164.9" y="243.30" width="6.0" height="1.0" fill="#333" opacity="0.41250000000000003"/><rect x="171.9" y="243.30" width="5.9" height="1.0" fill="#333" opacity="0.41250000000000003"/><rect x="179.1" y="243.30" width="7.6" height="1.0" fill="#333" opacity="0.41250000000000003"/><rect x="187.9" y="243.30" width="6.9" height="1.0" fill="#333" opacity="0.41250000000000003"/><rect x="195.6" y="243.30" width="3.9" height="1.0" fill="#333" opacity="0.41250000000000003"/><rect x="200.5" y="243.30" width="7.5" height="1.0" fill="#333" opacity="0.41250000000000003"/><rect x="208.9" y="243.30" width="6.4" height="1.0" fill="#333" opacity="0.41250000000000003"/><rect x="216.2" y="243.30" width="3.4" height="1.0" fill="#333" opacity="0.41250000000000003"/><rect x="220.5" y="243.30" width="5.1" height="1.0" fill="#333" opacity="0.41250000000000003"/><rect x="143.2" y="246.30" width="7.1" height="1.0" fill="#333" opacity="0.41250000000000003"/><rect x="151.3" y="246.30" width="6.1" height="1.0" fill="#333" opacity="0.41250000000000003"/><rect x="158.5" y="246.30" width="5.8" height="1.0" fill="#333" opacity="0.41250000000000003"/><rect x="165.2" y="246.30" width="8.4" height="1.0" fill="#333" opacity="0.41250000000000003"/><rect x="174.5" y="246.30" width="8.9" height="1.0" fill="#333" opacity="0.41250000000000003"/><rect x="184.8" y="246.30" width="3.1" height="1.0" fill="#333" opacity="0.41250000000000003"/><rect x="189.0" y="246.30" width="7.9" height="1.0" fill="#333" opacity="0.41250000000000003"/><rect x="198.4" y="246.30" width="0.8" height="1.0" fill="#333" opacity="0.41250000000000003"/><rect x="143.2" y="250.70" width="4.3" height="1.0" fill="#333" opacity="0.41250000000000003"/><rect x="148.9" y="250.70" width="4.3" height="1.0" fill="#333" opacity="0.41250000000000003"/><rect x="154.4" y="250.70" width="3.9" height="1.0" fill="#333" opacity="0.41250000000000003"/><rect x="159.4" y="250.70" width="8.7" height="1.0" fill="#333" opacity="0.41250000000000003"/><rect x="169.0" y="250.70" width="7.9" height="1.0" fill="#333" opacity="0.41250000000000003"/><rect x="178.1" y="250.70" width="8.3" height="1.0" fill="#333" opacity="0.41250000000000003"/><rect x="187.7" y="250.70" width="4.4" height="1.0" fill="#333" opacity="0.41250000000000003"/><rect x="193.5" y="250.70" width="5.9" height="1.0" fill="#333" opacity="0.41250000000000003"/><rect x="200.3" y="250.70" width="3.0" height="1.0" fill="#333" opacity="0.41250000000000003"/><rect x="204.4" y="250.70" width="5.7" height="1.0" fill="#333" opacity="0.41250000000000003"/><rect x="211.1" y="250.70" width="3.8" height="1.0" fill="#333" opacity="0.41250000000000003"/><rect x="216.0" y="250.70" width="4.9" height="1.0" fill="#333" opacity="0.41250000000000003"/><rect x="222.3" y="250.70" width="3.0" height="1.0" fill="#333" opacity="0.41250000000000003"/><rect x="143.2" y="253.50" width="8.0" height="1.0" fill="#333" opacity="0.41250000000000003"/><rect x="152.1" y="253.50" width="8.6" height="1.0" fill="#333" opacity="0.41250000000000003"/><rect x="162.0" y="253.50" width="8.4" height="1.0" fill="#333" opacity="0.41250000000000003"/><rect x="171.4" y="253.50" width="5.2" height="1.0" fill="#333" opacity="0.41250000000000003"/><rect x="177.7" y="253.50" width="9.0" height="1.0" fill="#333" opacity="0.41250000000000003"/><rect x="187.9" y="253.50" width="5.2" height="1.0" fill="#333" opacity="0.41250000000000003"/><rect x="194.2" y="253.50" width="4.7" height="1.0" fill="#333" opacity="0.41250000000000003"/><rect x="199.7" y="253.50" width="3.6" height="1.0" fill="#333" opacity="0.41250000000000003"/><rect x="204.6" y="253.50" width="4.7" height="1.0" fill="#333" opacity="0.41250000000000003"/><rect x="210.8" y="253.50" width="4.5" height="1.0" fill="#333" opacity="0.41250000000000003"/><rect x="216.3" y="253.50" width="6.1" height="1.0" fill="#333" opacity="0.41250000000000003"/><rect x="223.3" y="253.50" width="2.3" height="1.0" fill="#333" opacity="0.41250000000000003"/><rect x="143.2" y="256.40" width="8.3" height="1.0" fill="#333" opacity="0.41250000000000003"/><rect x="152.9" y="256.40" width="6.8" height="1.0" fill="#333" opacity="0.41250000000000003"/><rect x="161.1" y="256.40" width="8.6" height="1.0" fill="#333" opacity="0.41250000000000003"/><rect x="170.9" y="256.40" width="7.3" height="1.0" fill="#333" opacity="0.41250000000000003"/><rect x="179.1" y="256.40" width="7.4" height="1.0" fill="#333" opacity="0.41250000000000003"/><rect x="187.6" y="256.40" width="7.5" height="1.0" fill="#333" opacity="0.41250000000000003"/><rect x="196.4" y="256.40" width="4.7" height="1.0" fill="#333" opacity="0.41250000000000003"/><rect x="201.9" y="256.40" width="8.6" height="1.0" fill="#333" opacity="0.41250000000000003"/><rect x="211.4" y="256.40" width="5.8" height="1.0" fill="#333" opacity="0.41250000000000003"/><rect x="218.2" y="256.40" width="4.8" height="1.0" fill="#333" opacity="0.41250000000000003"/><rect x="224.3" y="256.40" width="1.3" height="1.0" fill="#333" opacity="0.41250000000000003"/><rect x="143.2" y="259.50" width="6.9" height="1.0" fill="#333" opacity="0.41250000000000003"/><rect x="151.1" y="259.50" width="6.3" height="1.0" fill="#333" opacity="0.41250000000000003"/><rect x="158.6" y="259.50" width="4.0" height="1.0" fill="#333" opacity="0.41250000000000003"/><rect x="163.5" y="259.50" width="4.2" height="1.0" fill="#333" opacity="0.41250000000000003"/><rect x="169.2" y="259.50" width="6.0" height="1.0" fill="#333" opacity="0.41250000000000003"/><rect x="176.1" y="259.50" width="8.4" height="1.0" fill="#333" opacity="0.41250000000000003"/><rect x="186.0" y="259.50" width="5.7" height="1.0" fill="#333" opacity="0.41250000000000003"/><rect x="192.6" y="259.50" width="4.2" height="1.0" fill="#333" opacity="0.41250000000000003"/><rect x="197.7" y="259.50" width="5.1" height="1.0" fill="#333" opacity="0.41250000000000003"/><rect x="203.6" y="259.50" width="4.4" height="1.0" fill="#333" opacity="0.41250000000000003"/><rect x="209.0" y="259.50" width="6.4" height="1.0" fill="#333" opacity="0.41250000000000003"/><rect x="216.8" y="259.50" width="7.5" height="1.0" fill="#333" opacity="0.41250000000000003"/><rect x="225.4" y="259.50" width="0.2" height="1.0" fill="#333" opacity="0.41250000000000003"/><rect x="143.2" y="262.30" width="5.3" height="1.0" fill="#333" opacity="0.41250000000000003"/><rect x="149.5" y="262.30" width="3.4" height="1.0" fill="#333" opacity="0.41250000000000003"/><rect x="153.9" y="262.30" width="8.8" height="1.0" fill="#333" opacity="0.41250000000000003"/><rect x="163.6" y="262.30" width="6.0" height="1.0" fill="#333" opacity="0.41250000000000003"/><rect x="170.8" y="262.30" width="8.2" height="1.0" fill="#333" opacity="0.41250000000000003"/><rect x="179.9" y="262.30" width="4.6" height="1.0" fill="#333" opacity="0.41250000000000003"/><rect x="185.5" y="262.30" width="3.0" height="1.0" fill="#333" opacity="0.41250000000000003"/><rect x="143.2" y="332.90" width="8.7" height="1.0" fill="#444" opacity="0.5625"/><rect x="153.3" y="332.90" width="8.2" height="1.0" fill="#444" opacity="0.5625"/><rect x="162.4" y="332.90" width="3.2" height="1.0" fill="#444" opacity="0.5625"/><rect x="166.9" y="332.90" width="8.4" height="1.0" fill="#444" opacity="0.5625"/><rect x="176.4" y="332.90" width="6.5" height="1.0" fill="#444" opacity="0.5625"/><rect x="183.7" y="332.90" width="5.3" height="1.0" fill="#444" opacity="0.5625"/><rect x="190.5" y="332.90" width="8.0" height="1.0" fill="#444" opacity="0.5625"/><rect x="199.8" y="332.90" width="8.8" height="1.0" fill="#444" opacity="0.5625"/><rect x="209.6" y="332.90" width="3.7" height="1.0" fill="#444" opacity="0.5625"/><rect x="214.2" y="332.90" width="6.1" height="1.0" fill="#444" opacity="0.5625"/><rect x="221.6" y="332.90" width="3.8" height="1.0" fill="#444" opacity="0.5625"/><rect x="143.2" y="335.70" width="6.9" height="1.0" fill="#444" opacity="0.5625"/><rect x="151.4" y="335.70" width="5.7" height="1.0" fill="#444" opacity="0.5625"/><rect x="158.3" y="335.70" width="3.2" height="1.0" fill="#444" opacity="0.5625"/><rect x="162.9" y="335.70" width="4.4" height="1.0" fill="#444" opacity="0.5625"/><rect x="168.8" y="335.70" width="6.9" height="1.0" fill="#444" opacity="0.5625"/><rect x="176.7" y="335.70" width="3.8" height="1.0" fill="#444" opacity="0.5625"/><rect x="181.4" y="335.70" width="6.8" height="1.0" fill="#444" opacity="0.5625"/><rect x="189.5" y="335.70" width="3.7" height="1.0" fill="#444" opacity="0.5625"/><rect x="194.0" y="335.70" width="6.1" height="1.0" fill="#444" opacity="0.5625"/><rect x="201.4" y="335.70" width="5.3" height="1.0" fill="#444" opacity="0.5625"/><rect x="207.7" y="335.70" width="6.6" height="1.0" fill="#444" opacity="0.5625"/><rect x="215.1" y="335.70" width="4.8" height="1.0" fill="#444" opacity="0.5625"/><rect x="221.0" y="335.70" width="4.4" height="1.0" fill="#444" opacity="0.5625"/><rect x="143.2" y="338.60" width="8.3" height="1.0" fill="#444" opacity="0.5625"/><rect x="152.6" y="338.60" width="4.4" height="1.0" fill="#444" opacity="0.5625"/><rect x="158.0" y="338.60" width="8.8" height="1.0" fill="#444" opacity="0.5625"/><rect x="168.1" y="338.60" width="4.8" height="1.0" fill="#444" opacity="0.5625"/><rect x="173.7" y="338.60" width="6.0" height="1.0" fill="#444" opacity="0.5625"/><rect x="181.0" y="338.60" width="5.5" height="1.0" fill="#444" opacity="0.5625"/><rect x="187.5" y="338.60" width="7.0" height="1.0" fill="#444" opacity="0.5625"/><rect x="195.9" y="338.60" width="4.4" height="1.0" fill="#444" opacity="0.5625"/><rect x="201.1" y="338.60" width="5.0" height="1.0" fill="#444" opacity="0.5625"/><rect x="207.3" y="338.60" width="7.1" height="1.0" fill="#444" opacity="0.5625"/><rect x="215.3" y="338.60" width="7.8" height="1.0" fill="#444" opacity="0.5625"/><rect x="224.4" y="338.60" width="1.0" height="1.0" fill="#444" opacity="0.5625"/><rect x="143.2" y="341.50" width="8.8" height="1.0" fill="#444" opacity="0.5625"/><rect x="153.0" y="341.50" width="7.9" height="1.0" fill="#444" opacity="0.5625"/><rect x="161.9" y="341.50" width="4.3" height="1.0" fill="#444" opacity="0.5625"/><rect x="167.6" y="341.50" width="4.8" height="1.0" fill="#444" opacity="0.5625"/><rect x="173.8" y="341.50" width="6.0" height="1.0" fill="#444" opacity="0.5625"/><rect x="180.7" y="341.50" width="4.3" height="1.0" fill="#444" opacity="0.5625"/><rect x="186.2" y="341.50" width="7.0" height="1.0" fill="#444" opacity="0.5625"/><rect x="194.6" y="341.50" width="3.9" height="1.0" fill="#444" opacity="0.5625"/><rect x="199.6" y="341.50" width="4.3" height="1.0" fill="#444" opacity="0.5625"/><rect x="205.3" y="341.50" width="3.6" height="1.0" fill="#444" opacity="0.5625"/><rect x="143.2" y="345.90" width="3.4" height="1.0" fill="#444" opacity="0.5625"/><rect x="147.6" y="345.90" width="8.4" height="1.0" fill="#444" opacity="0.5625"/><rect x="157.4" y="345.90" width="7.4" height="1.0" fill="#444" opacity="0.5625"/><rect x="166.3" y="345.90" width="8.6" height="1.0" fill="#444" opacity="0.5625"/><rect x="176.0" y="345.90" width="4.1" height="1.0" fill="#444" opacity="0.5625"/><rect x="181.5" y="345.90" width="7.5" height="1.0" fill="#444" opacity="0.5625"/><rect x="189.8" y="345.90" width="7.0" height="1.0" fill="#444" opacity="0.5625"/><rect x="197.9" y="345.90" width="5.2" height="1.0" fill="#444" opacity="0.5625"/><rect x="204.2" y="345.90" width="4.0" height="1.0" fill="#444" opacity="0.5625"/><rect x="209.0" y="345.90" width="4.7" height="1.0" fill="#444" opacity="0.5625"/><rect x="214.7" y="345.90" width="8.7" height="1.0" fill="#444" opacity="0.5625"/><rect x="224.3" y="345.90" width="1.1" height="1.0" fill="#444" opacity="0.5625"/><rect x="143.2" y="348.80" width="5.1" height="1.0" fill="#444" opacity="0.5625"/><rect x="149.7" y="348.80" width="7.9" height="1.0" fill="#444" opacity="0.5625"/><rect x="158.7" y="348.80" width="3.3" height="1.0" fill="#444" opacity="0.5625"/><rect x="163.2" y="348.80" width="5.2" height="1.0" fill="#444" opacity="0.5625"/><rect x="169.9" y="348.80" width="4.2" height="1.0" fill="#444" opacity="0.5625"/><rect x="175.1" y="348.80" width="8.4" height="1.0" fill="#444" opacity="0.5625"/><rect x="184.3" y="348.80" width="5.5" height="1.0" fill="#444" opacity="0.5625"/><rect x="191.1" y="348.80" width="7.6" height="1.0" fill="#444" opacity="0.5625"/><rect x="199.5" y="348.80" width="3.2" height="1.0" fill="#444" opacity="0.5625"/><rect x="203.6" y="348.80" width="8.5" height="1.0" fill="#444" opacity="0.5625"/><rect x="213.1" y="348.80" width="7.5" height="1.0" fill="#444" opacity="0.5625"/><rect x="222.0" y="348.80" width="3.4" height="1.0" fill="#444" opacity="0.5625"/><rect x="143.2" y="351.80" width="8.7" height="1.0" fill="#444" opacity="0.5625"/><rect x="153.2" y="351.80" width="4.6" height="1.0" fill="#444" opacity="0.5625"/><rect x="159.1" y="351.80" width="4.9" height="1.0" fill="#444" opacity="0.5625"/><rect x="164.9" y="351.80" width="3.0" height="1.0" fill="#444" opacity="0.5625"/><rect x="169.3" y="351.80" width="8.5" height="1.0" fill="#444" opacity="0.5625"/><rect x="179.0" y="351.80" width="8.7" height="1.0" fill="#444" opacity="0.5625"/><rect x="188.5" y="351.80" width="4.4" height="1.0" fill="#444" opacity="0.5625"/><rect x="194.1" y="351.80" width="8.7" height="1.0" fill="#444" opacity="0.5625"/><rect x="204.3" y="351.80" width="5.3" height="1.0" fill="#444" opacity="0.5625"/><rect x="210.6" y="351.80" width="5.6" height="1.0" fill="#444" opacity="0.5625"/><rect x="217.3" y="351.80" width="8.1" height="1.0" fill="#444" opacity="0.5625"/><rect x="143.2" y="354.70" width="7.8" height="1.0" fill="#444" opacity="0.5625"/><rect x="152.3" y="354.70" width="7.9" height="1.0" fill="#444" opacity="0.5625"/><rect x="161.6" y="354.70" width="6.6" height="1.0" fill="#444" opacity="0.5625"/><rect x="169.3" y="354.70" width="4.9" height="1.0" fill="#444" opacity="0.5625"/><rect x="175.3" y="354.70" width="7.7" height="1.0" fill="#444" opacity="0.5625"/><rect x="183.8" y="354.70" width="4.2" height="1.0" fill="#444" opacity="0.5625"/><rect x="189.3" y="354.70" width="4.5" height="1.0" fill="#444" opacity="0.5625"/><rect x="194.6" y="354.70" width="3.2" height="1.0" fill="#444" opacity="0.5625"/><rect x="199.0" y="354.70" width="5.0" height="1.0" fill="#444" opacity="0.5625"/><rect x="205.5" y="354.70" width="8.3" height="1.0" fill="#444" opacity="0.5625"/><rect x="215.3" y="354.70" width="4.6" height="1.0" fill="#444" opacity="0.5625"/><rect x="220.7" y="354.70" width="3.6" height="1.0" fill="#444" opacity="0.5625"/><rect x="143.2" y="357.50" width="7.3" height="1.0" fill="#444" opacity="0.5625"/><rect x="151.6" y="357.50" width="4.4" height="1.0" fill="#444" opacity="0.5625"/><rect x="157.1" y="357.50" width="6.7" height="1.0" fill="#444" opacity="0.5625"/><rect x="165.1" y="357.50" width="7.5" height="1.0" fill="#444" opacity="0.5625"/><rect x="173.9" y="357.50" width="7.0" height="1.0" fill="#444" opacity="0.5625"/><rect x="181.8" y="357.50" width="8.0" height="1.0" fill="#444" opacity="0.5625"/><rect x="190.9" y="357.50" width="6.4" height="1.0" fill="#444" opacity="0.5625"/><rect x="198.3" y="357.50" width="7.4" height="1.0" fill="#444" opacity="0.5625"/><rect x="206.7" y="357.50" width="4.5" height="1.0" fill="#444" opacity="0.5625"/><rect x="212.2" y="357.50" width="3.9" height="1.0" fill="#444" opacity="0.5625"/><rect x="217.5" y="357.50" width="6.5" height="1.0" fill="#444" opacity="0.5625"/><rect x="225.0" y="357.50" width="0.4" height="1.0" fill="#444" opacity="0.5625"/><rect x="143.2" y="360.70" width="6.0" height="1.0" fill="#444" opacity="0.5625"/><rect x="150.2" y="360.70" width="7.9" height="1.0" fill="#444" opacity="0.5625"/><rect x="159.3" y="360.70" width="8.9" height="1.0" fill="#444" opacity="0.5625"/><rect x="169.1" y="360.70" width="5.8" height="1.0" fill="#444" opacity="0.5625"/><rect x="176.4" y="360.70" width="8.0" height="1.0" fill="#444" opacity="0.5625"/><rect x="185.8" y="360.70" width="3.2" height="1.0" fill="#444" opacity="0.5625"/><rect x="190.1" y="360.70" width="3.7" height="1.0" fill="#444" opacity="0.5625"/><rect x="194.7" y="360.70" width="8.8" height="1.0" fill="#444" opacity="0.5625"/><rect x="204.8" y="360.70" width="8.6" height="1.0" fill="#444" opacity="0.5625"/><rect x="214.4" y="360.70" width="6.9" height="1.0" fill="#444" opacity="0.5625"/><rect x="143.2" y="365.75" width="4.6" height="1.5" fill="#bb2446" opacity="0.8250000000000001"/><rect x="149.1" y="365.75" width="8.7" height="1.5" fill="#bb2446" opacity="0.8250000000000001"/><rect x="158.7" y="365.75" width="6.6" height="1.5" fill="#bb2446" opacity="0.8250000000000001"/><rect x="166.5" y="365.75" width="4.3" height="1.5" fill="#bb2446" opacity="0.8250000000000001"/><rect x="171.8" y="365.75" width="3.8" height="1.5" fill="#bb2446" opacity="0.8250000000000001"/><rect x="176.6" y="365.75" width="4.5" height="1.5" fill="#bb2446" opacity="0.8250000000000001"/><rect x="182.4" y="365.75" width="6.9" height="1.5" fill="#bb2446" opacity="0.8250000000000001"/><rect x="190.2" y="365.75" width="3.1" height="1.5" fill="#bb2446" opacity="0.8250000000000001"/><rect x="194.3" y="365.75" width="7.1" height="1.5" fill="#bb2446" opacity="0.8250000000000001"/><rect x="202.3" y="365.75" width="4.9" height="1.5" fill="#bb2446" opacity="0.8250000000000001"/><rect x="208.1" y="365.75" width="7.8" height="1.5" fill="#bb2446" opacity="0.8250000000000001"/><rect x="217.1" y="365.75" width="1.4" height="1.5" fill="#bb2446" opacity="0.8250000000000001"/><rect x="143.2" y="371.95" width="5.4" height="1.5" fill="#bb2446" opacity="0.8250000000000001"/><rect x="149.8" y="371.95" width="6.8" height="1.5" fill="#bb2446" opacity="0.8250000000000001"/><rect x="157.5" y="371.95" width="4.0" height="1.5" fill="#bb2446" opacity="0.8250000000000001"/><rect x="162.7" y="371.95" width="5.5" height="1.5" fill="#bb2446" opacity="0.8250000000000001"/><rect x="169.2" y="371.95" width="4.8" height="1.5" fill="#bb2446" opacity="0.8250000000000001"/><rect x="175.5" y="371.95" width="4.9" height="1.5" fill="#bb2446" opacity="0.8250000000000001"/><rect x="181.6" y="371.95" width="5.1" height="1.5" fill="#bb2446" opacity="0.8250000000000001"/><rect x="187.8" y="371.95" width="1.2" height="1.5" fill="#bb2446" opacity="0.8250000000000001"/><rect x="143.2" y="377.40" width="5.2" height="1.6" fill="#bb2446" opacity="0.8250000000000001"/><rect x="149.3" y="377.40" width="7.4" height="1.6" fill="#bb2446" opacity="0.8250000000000001"/><rect x="157.6" y="377.40" width="3.0" height="1.6" fill="#bb2446" opacity="0.8250000000000001"/><rect x="162.1" y="377.40" width="5.5" height="1.6" fill="#bb2446" opacity="0.8250000000000001"/><rect x="169.0" y="377.40" width="5.4" height="1.6" fill="#bb2446" opacity="0.8250000000000001"/><rect x="175.9" y="377.40" width="5.8" height="1.6" fill="#bb2446" opacity="0.8250000000000001"/><rect x="182.5" y="377.40" width="3.1" height="1.6" fill="#bb2446" opacity="0.8250000000000001"/><rect x="186.8" y="377.40" width="6.8" height="1.6" fill="#bb2446" opacity="0.8250000000000001"/><rect x="195.1" y="377.40" width="3.5" height="1.6" fill="#bb2446" opacity="0.8250000000000001"/><rect x="199.9" y="377.40" width="5.2" height="1.6" fill="#bb2446" opacity="0.8250000000000001"/><rect x="206.3" y="377.40" width="3.9" height="1.6" fill="#bb2446" opacity="0.8250000000000001"/><rect x="211.1" y="377.40" width="6.1" height="1.6" fill="#bb2446" opacity="0.8250000000000001"/><rect x="218.7" y="377.40" width="3.7" height="1.6" fill="#bb2446" opacity="0.8250000000000001"/><rect x="223.5" y="377.40" width="1.9" height="1.6" fill="#bb2446" opacity="0.8250000000000001"/><rect x="143.2" y="381.80" width="4.2" height="1.6" fill="#bb2446" opacity="0.8250000000000001"/><rect x="148.3" y="381.80" width="8.7" height="1.6" fill="#bb2446" opacity="0.8250000000000001"/><rect x="158.4" y="381.80" width="5.9" height="1.6" fill="#bb2446" opacity="0.8250000000000001"/><rect x="165.1" y="381.80" width="8.6" height="1.6" fill="#bb2446" opacity="0.8250000000000001"/><rect x="174.8" y="381.80" width="8.4" height="1.6" fill="#bb2446" opacity="0.8250000000000001"/><rect x="184.4" y="381.80" width="7.9" height="1.6" fill="#bb2446" opacity="0.8250000000000001"/><rect x="193.3" y="381.80" width="7.7" height="1.6" fill="#bb2446" opacity="0.8250000000000001"/><rect x="202.0" y="381.80" width="5.4" height="1.6" fill="#bb2446" opacity="0.8250000000000001"/><rect x="208.8" y="381.80" width="8.0" height="1.6" fill="#bb2446" opacity="0.8250000000000001"/><rect x="217.7" y="381.80" width="4.3" height="1.6" fill="#bb2446" opacity="0.8250000000000001"/><rect x="223.1" y="381.80" width="2.3" height="1.6" fill="#bb2446" opacity="0.8250000000000001"/><rect x="143.2" y="386.20" width="3.7" height="1.6" fill="#bb2446" opacity="0.8250000000000001"/><rect x="147.9" y="386.20" width="7.3" height="1.6" fill="#bb2446" opacity="0.8250000000000001"/><rect x="156.7" y="386.20" width="3.2" height="1.6" fill="#bb2446" opacity="0.8250000000000001"/><rect x="161.1" y="386.20" width="7.5" height="1.6" fill="#bb2446" opacity="0.8250000000000001"/><rect x="169.5" y="386.20" width="8.0" height="1.6" fill="#bb2446" opacity="0.8250000000000001"/><rect x="178.4" y="386.20" width="6.6" height="1.6" fill="#bb2446" opacity="0.8250000000000001"/><rect x="186.2" y="386.20" width="6.8" height="1.6" fill="#bb2446" opacity="0.8250000000000001"/><rect x="194.0" y="386.20" width="5.5" height="1.6" fill="#bb2446" opacity="0.8250000000000001"/><rect x="200.7" y="386.20" width="5.6" height="1.6" fill="#bb2446" opacity="0.8250000000000001"/><rect x="207.5" y="386.20" width="5.7" height="1.6" fill="#bb2446" opacity="0.8250000000000001"/><rect x="214.3" y="386.20" width="3.1" height="1.6" fill="#bb2446" opacity="0.8250000000000001"/><rect x="218.7" y="386.20" width="5.9" height="1.6" fill="#bb2446" opacity="0.8250000000000001"/><rect x="143.2" y="390.50" width="7.6" height="1.6" fill="#bb2446" opacity="0.8250000000000001"/><rect x="152.1" y="390.50" width="5.7" height="1.6" fill="#bb2446" opacity="0.8250000000000001"/><rect x="158.8" y="390.50" width="5.8" height="1.6" fill="#bb2446" opacity="0.8250000000000001"/><rect x="165.5" y="390.50" width="3.8" height="1.6" fill="#bb2446" opacity="0.8250000000000001"/><rect x="170.4" y="390.50" width="3.6" height="1.6" fill="#bb2446" opacity="0.8250000000000001"/><rect x="175.0" y="390.50" width="6.1" height="1.6" fill="#bb2446" opacity="0.8250000000000001"/><rect x="181.9" y="390.50" width="6.8" height="1.6" fill="#bb2446" opacity="0.8250000000000001"/><rect x="189.6" y="390.50" width="7.4" height="1.6" fill="#bb2446" opacity="0.8250000000000001"/><rect x="198.4" y="390.50" width="6.1" height="1.6" fill="#bb2446" opacity="0.8250000000000001"/><rect x="205.3" y="390.50" width="6.0" height="1.6" fill="#bb2446" opacity="0.8250000000000001"/><rect x="212.4" y="390.50" width="8.7" height="1.6" fill="#bb2446" opacity="0.8250000000000001"/><rect x="222.0" y="390.50" width="3.4" height="1.6" fill="#bb2446" opacity="0.8250000000000001"/><rect x="143.2" y="394.90" width="7.4" height="1.6" fill="#bb2446" opacity="0.8250000000000001"/><rect x="152.0" y="394.90" width="4.2" height="1.6" fill="#bb2446" opacity="0.8250000000000001"/><rect x="157.6" y="394.90" width="6.0" height="1.6" fill="#bb2446" opacity="0.8250000000000001"/><rect x="165.0" y="394.90" width="8.5" height="1.6" fill="#bb2446" opacity="0.8250000000000001"/><rect x="174.4" y="394.90" width="7.7" height="1.6" fill="#bb2446" opacity="0.8250000000000001"/><rect x="183.6" y="394.90" width="3.4" height="1.6" fill="#bb2446" opacity="0.8250000000000001"/><rect x="188.1" y="394.90" width="7.5" height="1.6" fill="#bb2446" opacity="0.8250000000000001"/><rect x="196.5" y="394.90" width="8.4" height="1.6" fill="#bb2446" opacity="0.8250000000000001"/><rect x="205.9" y="394.90" width="7.9" height="1.6" fill="#bb2446" opacity="0.8250000000000001"/><rect x="214.7" y="394.90" width="6.0" height="1.6" fill="#bb2446" opacity="0.8250000000000001"/><rect x="222.1" y="394.90" width="3.3" height="1.6" fill="#bb2446" opacity="0.8250000000000001"/><rect x="143.2" y="399.20" width="6.0" height="1.6" fill="#bb2446" opacity="0.8250000000000001"/><rect x="150.3" y="399.20" width="3.2" height="1.6" fill="#bb2446" opacity="0.8250000000000001"/><rect x="154.4" y="399.20" width="4.0" height="1.6" fill="#bb2446" opacity="0.8250000000000001"/><rect x="159.8" y="399.20" width="7.1" height="1.6" fill="#bb2446" opacity="0.8250000000000001"/><rect x="168.3" y="399.20" width="4.0" height="1.6" fill="#bb2446" opacity="0.8250000000000001"/><rect x="173.7" y="399.20" width="3.7" height="1.6" fill="#bb2446" opacity="0.8250000000000001"/><rect x="178.6" y="399.20" width="6.8" height="1.6" fill="#bb2446" opacity="0.8250000000000001"/><rect x="186.4" y="399.20" width="8.2" height="1.6" fill="#bb2446" opacity="0.8250000000000001"/><rect x="195.9" y="399.20" width="6.5" height="1.6" fill="#bb2446" opacity="0.8250000000000001"/><rect x="203.8" y="399.20" width="3.6" height="1.6" fill="#bb2446" opacity="0.8250000000000001"/><rect x="208.9" y="399.20" width="6.8" height="1.6" fill="#bb2446" opacity="0.8250000000000001"/><rect x="216.7" y="399.20" width="7.8" height="1.6" fill="#bb2446" opacity="0.8250000000000001"/><rect x="143.2" y="403.60" width="8.9" height="1.6" fill="#bb2446" opacity="0.8250000000000001"/><rect x="153.3" y="403.60" width="5.2" height="1.6" fill="#bb2446" opacity="0.8250000000000001"/><rect x="159.8" y="403.60" width="5.7" height="1.6" fill="#bb2446" opacity="0.8250000000000001"/><rect x="166.4" y="403.60" width="7.5" height="1.6" fill="#bb2446" opacity="0.8250000000000001"/><rect x="174.7" y="403.60" width="7.9" height="1.6" fill="#bb2446" opacity="0.8250000000000001"/><rect x="183.6" y="403.60" width="6.8" height="1.6" fill="#bb2446" opacity="0.8250000000000001"/><rect x="191.9" y="403.60" width="6.5" height="1.6" fill="#bb2446" opacity="0.8250000000000001"/><rect x="199.7" y="403.60" width="4.9" height="1.6" fill="#bb2446" opacity="0.8250000000000001"/><rect x="205.4" y="403.60" width="3.2" height="1.6" fill="#bb2446" opacity="0.8250000000000001"/><rect x="209.5" y="403.60" width="6.7" height="1.6" fill="#bb2446" opacity="0.8250000000000001"/><rect x="217.3" y="403.60" width="6.1" height="1.6" fill="#bb2446" opacity="0.8250000000000001"/><rect x="224.8" y="403.60" width="0.6" height="1.6" fill="#bb2446" opacity="0.8250000000000001"/><rect x="143.2" y="408.20" width="6.9" height="1.6" fill="#bb2446" opacity="0.8250000000000001"/><rect x="150.9" y="408.20" width="3.0" height="1.6" fill="#bb2446" opacity="0.8250000000000001"/><rect x="155.0" y="408.20" width="3.6" height="1.6" fill="#bb2446" opacity="0.8250000000000001"/><rect x="159.7" y="408.20" width="4.3" height="1.6" fill="#bb2446" opacity="0.8250000000000001"/><rect x="165.2" y="408.20" width="6.5" height="1.6" fill="#bb2446" opacity="0.8250000000000001"/><rect x="172.7" y="408.20" width="6.7" height="1.6" fill="#bb2446" opacity="0.8250000000000001"/><rect x="180.6" y="408.20" width="3.8" height="1.6" fill="#bb2446" opacity="0.8250000000000001"/><text x="225" y="548.5" font-family="Liberation Sans" font-weight="bold" font-size="6.6" text-anchor="end" fill="#111">Preface</text><rect x="143.2" y="578.30" width="4.5" height="1.0" fill="#444" opacity="0.375"/><rect x="148.6" y="578.30" width="3.6" height="1.0" fill="#444" opacity="0.375"/><rect x="153.4" y="578.30" width="8.2" height="1.0" fill="#444" opacity="0.375"/><rect x="163.0" y="578.30" width="5.4" height="1.0" fill="#444" opacity="0.375"/><rect x="169.4" y="578.30" width="3.1" height="1.0" fill="#444" opacity="0.375"/><rect x="173.7" y="578.30" width="6.4" height="1.0" fill="#444" opacity="0.375"/><rect x="181.1" y="578.30" width="6.9" height="1.0" fill="#444" opacity="0.375"/><rect x="189.1" y="578.30" width="8.6" height="1.0" fill="#444" opacity="0.375"/><rect x="199.0" y="578.30" width="4.5" height="1.0" fill="#444" opacity="0.375"/><rect x="204.9" y="578.30" width="3.3" height="1.0" fill="#444" opacity="0.375"/><rect x="209.4" y="578.30" width="5.4" height="1.0" fill="#444" opacity="0.375"/><rect x="215.8" y="578.30" width="3.4" height="1.0" fill="#444" opacity="0.375"/><rect x="220.5" y="578.30" width="3.1" height="1.0" fill="#444" opacity="0.375"/><rect x="224.7" y="578.30" width="1.3" height="1.0" fill="#444" opacity="0.375"/><rect x="143.2" y="581.10" width="4.2" height="1.0" fill="#444" opacity="0.375"/><rect x="148.6" y="581.10" width="6.0" height="1.0" fill="#444" opacity="0.375"/><rect x="155.9" y="581.10" width="7.9" height="1.0" fill="#444" opacity="0.375"/><rect x="164.7" y="581.10" width="4.9" height="1.0" fill="#444" opacity="0.375"/><rect x="170.6" y="581.10" width="3.3" height="1.0" fill="#444" opacity="0.375"/><rect x="175.3" y="581.10" width="7.7" height="1.0" fill="#444" opacity="0.375"/><rect x="184.3" y="581.10" width="3.0" height="1.0" fill="#444" opacity="0.375"/><rect x="188.7" y="581.10" width="7.5" height="1.0" fill="#444" opacity="0.375"/><rect x="197.3" y="581.10" width="7.5" height="1.0" fill="#444" opacity="0.375"/><rect x="205.9" y="581.10" width="4.4" height="1.0" fill="#444" opacity="0.375"/><rect x="211.1" y="581.10" width="4.4" height="1.0" fill="#444" opacity="0.375"/><rect x="216.3" y="581.10" width="5.0" height="1.0" fill="#444" opacity="0.375"/><rect x="222.7" y="581.10" width="3.3" height="1.0" fill="#444" opacity="0.375"/><rect x="143.2" y="584.10" width="7.3" height="1.0" fill="#444" opacity="0.375"/><rect x="151.5" y="584.10" width="6.3" height="1.0" fill="#444" opacity="0.375"/><rect x="158.9" y="584.10" width="7.7" height="1.0" fill="#444" opacity="0.375"/><rect x="167.8" y="584.10" width="4.6" height="1.0" fill="#444" opacity="0.375"/><rect x="173.6" y="584.10" width="8.8" height="1.0" fill="#444" opacity="0.375"/><rect x="183.4" y="584.10" width="8.3" height="1.0" fill="#444" opacity="0.375"/><rect x="192.5" y="584.10" width="4.6" height="1.0" fill="#444" opacity="0.375"/><rect x="198.0" y="584.10" width="7.5" height="1.0" fill="#444" opacity="0.375"/><rect x="206.9" y="584.10" width="7.5" height="1.0" fill="#444" opacity="0.375"/><rect x="215.4" y="584.10" width="8.3" height="1.0" fill="#444" opacity="0.375"/><rect x="224.7" y="584.10" width="1.3" height="1.0" fill="#444" opacity="0.375"/><rect x="143.2" y="587.10" width="6.8" height="1.0" fill="#444" opacity="0.375"/><rect x="151.3" y="587.10" width="7.0" height="1.0" fill="#444" opacity="0.375"/><rect x="159.7" y="587.10" width="5.8" height="1.0" fill="#444" opacity="0.375"/><rect x="167.0" y="587.10" width="7.2" height="1.0" fill="#444" opacity="0.375"/><rect x="175.5" y="587.10" width="5.6" height="1.0" fill="#444" opacity="0.375"/><rect x="182.5" y="587.10" width="3.5" height="1.0" fill="#444" opacity="0.375"/><rect x="143" y="577" width="34" height="12" fill="none" stroke="#e08080" stroke-width="0.4" opacity="0.7"/><rect x="198.7" y="571.6" width="19.7" height="9.8" rx="1" fill="none" stroke="#e06a6a" stroke-width="0.6"/><text x="208.5" y="578.6" font-family="Liberation Serif" font-size="4.6" text-anchor="middle" fill="#d04a4a">$1.5k</text><rect x="184.5" y="588" width="4.5" height="3.5" fill="#f0e070" opacity="0.8"/><rect x="143.2" y="594.10" width="4.3" height="1.0" fill="#555" opacity="0.30000000000000004"/><rect x="148.7" y="594.10" width="3.5" height="1.0" fill="#555" opacity="0.30000000000000004"/><rect x="153.6" y="594.10" width="3.9" height="1.0" fill="#555" opacity="0.30000000000000004"/><rect x="158.3" y="594.10" width="3.6" height="1.0" fill="#555" opacity="0.30000000000000004"/><rect x="163.4" y="594.10" width="5.1" height="1.0" fill="#555" opacity="0.30000000000000004"/><rect x="169.4" y="594.10" width="3.2" height="1.0" fill="#555" opacity="0.30000000000000004"/><rect x="173.4" y="594.10" width="7.2" height="1.0" fill="#555" opacity="0.30000000000000004"/><rect x="181.8" y="594.10" width="7.2" height="1.0" fill="#555" opacity="0.30000000000000004"/><rect x="190.3" y="594.10" width="3.4" height="1.0" fill="#555" opacity="0.30000000000000004"/><rect x="194.9" y="594.10" width="5.2" height="1.0" fill="#555" opacity="0.30000000000000004"/><rect x="201.4" y="594.10" width="7.9" height="1.0" fill="#555" opacity="0.30000000000000004"/><rect x="210.8" y="594.10" width="3.4" height="1.0" fill="#555" opacity="0.30000000000000004"/><rect x="215.6" y="594.10" width="8.5" height="1.0" fill="#555" opacity="0.30000000000000004"/><rect x="225.5" y="594.10" width="0.5" height="1.0" fill="#555" opacity="0.30000000000000004"/><rect x="143.2" y="597.00" width="3.7" height="1.0" fill="#555" opacity="0.30000000000000004"/><rect x="147.7" y="597.00" width="8.1" height="1.0" fill="#555" opacity="0.30000000000000004"/><rect x="157.2" y="597.00" width="6.8" height="1.0" fill="#555" opacity="0.30000000000000004"/><rect x="165.3" y="597.00" width="6.8" height="1.0" fill="#555" opacity="0.30000000000000004"/><rect x="173.1" y="597.00" width="3.6" height="1.0" fill="#555" opacity="0.30000000000000004"/><rect x="177.6" y="597.00" width="7.5" height="1.0" fill="#555" opacity="0.30000000000000004"/><rect x="186.1" y="597.00" width="4.9" height="1.0" fill="#555" opacity="0.30000000000000004"/><rect x="192.1" y="597.00" width="3.1" height="1.0" fill="#555" opacity="0.30000000000000004"/><rect x="196.2" y="597.00" width="4.7" height="1.0" fill="#555" opacity="0.30000000000000004"/><rect x="202.2" y="597.00" width="5.2" height="1.0" fill="#555" opacity="0.30000000000000004"/><rect x="208.4" y="597.00" width="8.8" height="1.0" fill="#555" opacity="0.30000000000000004"/><rect x="218.4" y="597.00" width="7.6" height="1.0" fill="#555" opacity="0.30000000000000004"/><rect x="143.2" y="600.00" width="3.2" height="1.0" fill="#555" opacity="0.30000000000000004"/><rect x="147.5" y="600.00" width="5.6" height="1.0" fill="#555" opacity="0.30000000000000004"/><rect x="154.4" y="600.00" width="5.1" height="1.0" fill="#555" opacity="0.30000000000000004"/><rect x="160.8" y="600.00" width="6.2" height="1.0" fill="#555" opacity="0.30000000000000004"/><rect x="168.0" y="600.00" width="8.2" height="1.0" fill="#555" opacity="0.30000000000000004"/><rect x="177.0" y="600.00" width="7.9" height="1.0" fill="#555" opacity="0.30000000000000004"/><rect x="185.9" y="600.00" width="3.0" height="1.0" fill="#555" opacity="0.30000000000000004"/><rect x="189.8" y="600.00" width="7.6" height="1.0" fill="#555" opacity="0.30000000000000004"/><rect x="198.9" y="600.00" width="3.0" height="1.0" fill="#555" opacity="0.30000000000000004"/><rect x="203.0" y="600.00" width="5.9" height="1.0" fill="#555" opacity="0.30000000000000004"/><rect x="210.3" y="600.00" width="4.1" height="1.0" fill="#555" opacity="0.30000000000000004"/><rect x="215.6" y="600.00" width="5.1" height="1.0" fill="#555" opacity="0.30000000000000004"/><rect x="222.1" y="600.00" width="3.9" height="1.0" fill="#555" opacity="0.30000000000000004"/><rect x="143.2" y="603.10" width="4.7" height="1.0" fill="#555" opacity="0.30000000000000004"/><rect x="148.9" y="603.10" width="7.2" height="1.0" fill="#555" opacity="0.30000000000000004"/><rect x="157.2" y="603.10" width="3.7" height="1.0" fill="#555" opacity="0.30000000000000004"/><rect x="162.1" y="603.10" width="3.5" height="1.0" fill="#555" opacity="0.30000000000000004"/><rect x="166.9" y="603.10" width="7.2" height="1.0" fill="#555" opacity="0.30000000000000004"/><rect x="175.5" y="603.10" width="6.8" height="1.0" fill="#555" opacity="0.30000000000000004"/><rect x="183.3" y="603.10" width="5.4" height="1.0" fill="#555" opacity="0.30000000000000004"/><rect x="189.8" y="603.10" width="8.3" height="1.0" fill="#555" opacity="0.30000000000000004"/><rect x="199.0" y="603.10" width="8.3" height="1.0" fill="#555" opacity="0.30000000000000004"/><rect x="208.1" y="603.10" width="1.9" height="1.0" fill="#555" opacity="0.30000000000000004"/><text x="143" y="612.3" font-family="Liberation Sans" font-weight="bold" font-size="3.9" fill="#111">Who This Book Is For</text><text x="143" y="632.3" font-family="Liberation Sans" font-weight="bold" font-size="3.9" fill="#111">How This Book Is Organized</text><path d="M133.5 614.5 139.5 610.5M136.5 610.5H139.5V613" stroke="#5a7ed8" stroke-width="0.6" fill="none"/><rect x="143" y="613.6" width="57" height="2.6" fill="#f3e35a"/><rect x="143.2" y="614.50" width="8.4" height="1.0" fill="#444" opacity="0.375"/><rect x="152.8" y="614.50" width="5.3" height="1.0" fill="#444" opacity="0.375"/><rect x="159.5" y="614.50" width="4.4" height="1.0" fill="#444" opacity="0.375"/><rect x="165.0" y="614.50" width="6.2" height="1.0" fill="#444" opacity="0.375"/><rect x="172.5" y="614.50" width="7.5" height="1.0" fill="#444" opacity="0.375"/><rect x="181.3" y="614.50" width="5.1" height="1.0" fill="#444" opacity="0.375"/><rect x="187.4" y="614.50" width="3.9" height="1.0" fill="#444" opacity="0.375"/><rect x="192.7" y="614.50" width="7.0" height="1.0" fill="#444" opacity="0.375"/><rect x="201.0" y="614.50" width="4.0" height="1.0" fill="#444" opacity="0.375"/><rect x="206.1" y="614.50" width="7.6" height="1.0" fill="#444" opacity="0.375"/><rect x="215.0" y="614.50" width="3.8" height="1.0" fill="#444" opacity="0.375"/><rect x="219.8" y="614.50" width="6.2" height="1.0" fill="#444" opacity="0.375"/><rect x="143.2" y="617.50" width="4.1" height="1.0" fill="#444" opacity="0.375"/><rect x="148.4" y="617.50" width="7.2" height="1.0" fill="#444" opacity="0.375"/><rect x="157.0" y="617.50" width="3.9" height="1.0" fill="#444" opacity="0.375"/><rect x="161.8" y="617.50" width="4.5" height="1.0" fill="#444" opacity="0.375"/><rect x="167.3" y="617.50" width="6.1" height="1.0" fill="#444" opacity="0.375"/><rect x="174.4" y="617.50" width="5.0" height="1.0" fill="#444" opacity="0.375"/><rect x="180.3" y="617.50" width="8.9" height="1.0" fill="#444" opacity="0.375"/><rect x="190.4" y="617.50" width="3.6" height="1.0" fill="#444" opacity="0.375"/><rect x="195.5" y="617.50" width="3.6" height="1.0" fill="#444" opacity="0.375"/><rect x="200.2" y="617.50" width="8.9" height="1.0" fill="#444" opacity="0.375"/><rect x="210.5" y="617.50" width="7.4" height="1.0" fill="#444" opacity="0.375"/><rect x="219.0" y="617.50" width="4.2" height="1.0" fill="#444" opacity="0.375"/><rect x="224.4" y="617.50" width="1.6" height="1.0" fill="#444" opacity="0.375"/><rect x="143.2" y="620.50" width="5.3" height="1.0" fill="#444" opacity="0.375"/><rect x="149.4" y="620.50" width="5.4" height="1.0" fill="#444" opacity="0.375"/><rect x="156.1" y="620.50" width="7.2" height="1.0" fill="#444" opacity="0.375"/><rect x="164.4" y="620.50" width="6.8" height="1.0" fill="#444" opacity="0.375"/><rect x="172.3" y="620.50" width="3.9" height="1.0" fill="#444" opacity="0.375"/><rect x="177.4" y="620.50" width="5.4" height="1.0" fill="#444" opacity="0.375"/><rect x="184.2" y="620.50" width="8.4" height="1.0" fill="#444" opacity="0.375"/><rect x="193.7" y="620.50" width="6.4" height="1.0" fill="#444" opacity="0.375"/><rect x="201.5" y="620.50" width="5.5" height="1.0" fill="#444" opacity="0.375"/><rect x="208.0" y="620.50" width="7.3" height="1.0" fill="#444" opacity="0.375"/><rect x="216.7" y="620.50" width="7.6" height="1.0" fill="#444" opacity="0.375"/><rect x="225.6" y="620.50" width="0.4" height="1.0" fill="#444" opacity="0.375"/><rect x="143.2" y="623.50" width="6.8" height="1.0" fill="#444" opacity="0.375"/><rect x="151.2" y="623.50" width="4.9" height="1.0" fill="#444" opacity="0.375"/><rect x="157.3" y="623.50" width="3.6" height="1.0" fill="#444" opacity="0.375"/><rect x="162.0" y="623.50" width="7.7" height="1.0" fill="#444" opacity="0.375"/><rect x="171.0" y="623.50" width="5.0" height="1.0" fill="#444" opacity="0.375"/><path d="M188 621.8H211" stroke="#d04060" stroke-width="0.6"/><rect x="185" y="609" width="28" height="4" fill="none" stroke="#9ed0d0" stroke-width="0.35"/><rect x="143.2" y="633.10" width="5.5" height="1.0" fill="#444" opacity="0.375"/><rect x="149.9" y="633.10" width="6.7" height="1.0" fill="#444" opacity="0.375"/><rect x="157.7" y="633.10" width="7.1" height="1.0" fill="#444" opacity="0.375"/><rect x="166.2" y="633.10" width="4.1" height="1.0" fill="#444" opacity="0.375"/><rect x="171.5" y="633.10" width="7.7" height="1.0" fill="#444" opacity="0.375"/><rect x="180.3" y="633.10" width="5.9" height="1.0" fill="#444" opacity="0.375"/><rect x="187.7" y="633.10" width="3.2" height="1.0" fill="#444" opacity="0.375"/><rect x="192.1" y="633.10" width="4.0" height="1.0" fill="#444" opacity="0.375"/><rect x="197.4" y="633.10" width="8.6" height="1.0" fill="#444" opacity="0.375"/><rect x="207.2" y="633.10" width="3.6" height="1.0" fill="#444" opacity="0.375"/><rect x="212.0" y="633.10" width="6.2" height="1.0" fill="#444" opacity="0.375"/><rect x="219.6" y="633.10" width="6.1" height="1.0" fill="#444" opacity="0.375"/><rect x="143.2" y="636.50" width="8.0" height="1.0" fill="#444" opacity="0.375"/><rect x="152.3" y="636.50" width="5.5" height="1.0" fill="#444" opacity="0.375"/><rect x="159.3" y="636.50" width="4.3" height="1.0" fill="#444" opacity="0.375"/><rect x="164.8" y="636.50" width="5.4" height="1.0" fill="#444" opacity="0.375"/><rect x="171.5" y="636.50" width="3.7" height="1.0" fill="#444" opacity="0.375"/><rect x="176.7" y="636.50" width="5.1" height="1.0" fill="#444" opacity="0.375"/><rect x="182.7" y="636.50" width="4.6" height="1.0" fill="#444" opacity="0.375"/><rect x="188.4" y="636.50" width="3.1" height="1.0" fill="#444" opacity="0.375"/><rect x="192.6" y="636.50" width="5.5" height="1.0" fill="#444" opacity="0.375"/><rect x="199.4" y="636.50" width="5.1" height="1.0" fill="#444" opacity="0.375"/><rect x="205.5" y="636.50" width="4.3" height="1.0" fill="#444" opacity="0.375"/><rect x="211.2" y="636.50" width="8.6" height="1.0" fill="#444" opacity="0.375"/><rect x="221.0" y="636.50" width="4.3" height="1.0" fill="#444" opacity="0.375"/><rect x="143.2" y="639.50" width="5.4" height="1.0" fill="#444" opacity="0.375"/><rect x="149.5" y="639.50" width="3.8" height="1.0" fill="#444" opacity="0.375"/><rect x="154.6" y="639.50" width="7.9" height="1.0" fill="#444" opacity="0.375"/><rect x="163.7" y="639.50" width="5.8" height="1.0" fill="#444" opacity="0.375"/><rect x="170.7" y="639.50" width="4.4" height="1.0" fill="#444" opacity="0.375"/><rect x="176.6" y="639.50" width="5.1" height="1.0" fill="#444" opacity="0.375"/><rect x="182.9" y="639.50" width="7.9" height="1.0" fill="#444" opacity="0.375"/><rect x="192.2" y="639.50" width="5.8" height="1.0" fill="#444" opacity="0.375"/><rect x="199.0" y="639.50" width="6.3" height="1.0" fill="#444" opacity="0.375"/><rect x="206.2" y="639.50" width="8.0" height="1.0" fill="#444" opacity="0.375"/><rect x="215.3" y="639.50" width="8.1" height="1.0" fill="#444" opacity="0.375"/><rect x="224.3" y="639.50" width="1.7" height="1.0" fill="#444" opacity="0.375"/><path d="M164 642C166 648 165 654 166 654C169 648 171 645 172 640M172 645C173 650 174 655 176 656C180 650 183 645 186 641M180 654 183 653 186 655 190 652 193 653 195 651" stroke="#4a6ed0" stroke-width="0.7" fill="none"/><path d="M216 601C214 605 213 609 215 612C218 614 222 613 223 609C224 605 222 602 221 598C220 601 220 603 219 604C219 600 218 598 217 599Z" fill="#e8821c"/><rect x="227.5" y="651.5" width="3" height="1.1" fill="#222"/></svg>

<!-- main -->
<div class="a" style="left:487px;top:76px;width:75px;height:20px;border-radius:4px;background:#fff"></div>
<svg class="a" style="left:493px;top:78px" width="18" height="16" viewBox="0 0 18 16" fill="none" stroke="#333" stroke-width="1.2">
<path d="M4 1.5H2.5A1.2 1.2 0 0 0 1.3 2.7V5.5M1.3 10.5V13.3A1.2 1.2 0 0 0 2.5 14.5H4M14 1.5H15.5A1.2 1.2 0 0 1 16.7 2.7V5.5M16.7 10.5V13.3A1.2 1.2 0 0 1 15.5 14.5H14M0.5 8H2M16 8H17.5"/>
<path d="M5.8 4.5H12.4M9.4 4.5 8 11.8" stroke-width="1.4"/></svg>
<svg class="a" style="left:516.5px;top:79.9px" width="38.0" height="12.6" fill="none" stroke="#262626" stroke-width="1.34" stroke-linecap="round" stroke-linejoin="round"><path transform="translate(1.00 2) scale(0.860)" d="M2 1.5H8M1 4.2H9M5.2 4.2C5.2 6.8 4.4 8.4 2.6 9.6"/><path transform="translate(10.00 2) scale(0.860)" d="M1.5 3.2L8.6 2.6M1 6.2L9.2 5.4M4.3 0.6L6.2 9.8"/><path transform="translate(19.00 2) scale(0.860)" d="M2 1.8H8C7 4.8 4.8 7.6 1.2 9.4M5.4 5.8L9.2 9.2"/><path transform="translate(28.00 2) scale(0.860)" d="M3.6 0.6V9.8M3.8 4L8.2 6.2"/></svg>
<div class="a" style="left:522.5px;top:100.5px;width:3px;height:3px;border-radius:50%;background:#a98cf0"></div>
<svg class="a" style="left:581px;top:78px" width="18" height="16" viewBox="0 0 18 16" fill="none" stroke="#333" stroke-width="1.2">
<rect x="1.6" y="1.6" width="14.8" height="12.8" rx="1.5"/><circle cx="5" cy="5" r="1.2" fill="#333" stroke="none"/><path d="M3.5 12.5 7 9 9 10.5 12 7.5 14.5 10V12.5Z" fill="#333" stroke="none"/></svg>
<svg class="a" style="left:603.0px;top:79.9px" width="21.2" height="12.6" fill="none" stroke="#262626" stroke-width="1.34" stroke-linecap="round" stroke-linejoin="round"><path transform="translate(1.00 2) scale(0.860)" d="M0.8 1.2H9.2M1.2 3V9.2H8.8V3M3 3.6V7.6H7V3.6ZM5 2.4V7.6M3 5.6H7"/><path transform="translate(10.60 2) scale(0.860)" d="M3.2 0.6L0.8 5M2.2 3.4V9.8M5.6 0.6L4.8 2M4.6 2.2H8.2L7.4 3.2M4.8 3.4H9.2V5.6H4.8ZM5 6.4L9.4 6M6.4 5.8L4.2 9M6.8 7L9.6 9.6M8 6.4V9.8"/></svg>
<svg class="a" style="left:649px;top:78px" width="18" height="16" viewBox="0 0 18 16" fill="none" stroke="#333" stroke-width="1.2">
<path d="M6.5 14.4H3A1.4 1.4 0 0 1 1.6 13V3A1.4 1.4 0 0 1 3 1.6H15A1.4 1.4 0 0 1 16.4 3V7.5M1.6 5H16.4"/><path d="M3.5 3.3H5.5" stroke-width="0.9"/><path d="M10 9.5H8.5A2 2 0 0 0 8.5 13.5H10M12 9.5H13.5A2 2 0 0 1 13.5 13.5H12M9.5 11.5H12.5"/></svg>
<svg class="a" style="left:672.0px;top:79.9px" width="29.3" height="12.6" fill="none" stroke="#262626" stroke-width="1.34" stroke-linecap="round" stroke-linejoin="round"><path transform="translate(1.00 2) scale(0.860)" d="M2.6 1.4V6.2M7.4 0.8V5C7.4 7.2 6 8.8 3.6 9.8"/><path transform="translate(10.10 2) scale(0.860)" d="M1.6 1.8L3.6 3.6M1.6 8.8C5 8 7.4 5.8 8.8 2"/><path transform="translate(19.20 2) scale(0.860)" d="M4 0.6C3.4 2.2 2.4 3.6 1 4.8M3.2 2.6H8.6C8 6 6 8.4 2.8 9.8"/></svg>

<div class="a page" style="left:287px;top:107px;width:620.5px;height:50.5px;box-shadow:0 0 2px rgba(0,0,0,0.07)"></div>
<div class="a" style="left:287px;top:157.5px;width:620.5px;height:9.5px;background:#ebebeb"></div>
<div class="a" style="left:834px;top:112px;font-size:9.4px;font-weight:bold;color:#111;line-height:12px">xxvii</div>
<div class="a page" style="left:287px;top:167px;width:620.5px;height:492px;box-shadow:0 0 2px rgba(0,0,0,0.07)"></div>

<!-- text -->
<div class="a" style="left:371px;top:220.5px;width:452.5px;height:450px;border:1px dashed #aca6d4"></div>
<div class="a tt" style="top:222.2px">While I don’t know coauthor Jessie Stricchiola personally, I do know her by reputa-</div>
<div class="a tt" style="top:238.0px">tion. Her work as an expert consultant and witness in legal matters is extremely well</div>
<div class="a tt" style="top:253.9px">known. This is a field that requires more than just an understanding of SEO, but also</div>
<div class="a tt" style="top:269.7px;width:415.4px">keen insight into the workings of the search industry and all the players within it.</div>
<div class="a tt" style="top:293.3px">To summarize, a couple of things stand out. The first is that despite having seen the</div>
<div class="a tt" style="top:309.2px">difference SEO can make in so many companies with my own eyes, most companies</div>
<div class="a tt" style="top:325.1px">still don’t really understand SEO and what it could bring them. When they do want to</div>
<div class="a tt" style="top:341.0px">invest in SEO, what people think works for SEO is more often than not based on what</div>
<div class="a tt" style="top:356.9px">I can only describe as nonsense. By reading this book and following its suggestions,</div>
<div class="a tt" style="top:372.8px;width:420px">you’ll make better decisions on SEO and, more importantly, produce better results.</div>

<!-- highlighted -->
<div class="a hb" style="top:399.1px;width:413px;height:18.69999999999999px"></div>
<div class="a hb" style="top:434.4px;width:247.5px;height:18.5px"></div>
<div class="a hb" style="top:462.5px;width:447px;height:17.5px"></div>
<div class="a hb" style="top:486.5px;width:447px;height:17.5px"></div>
<div class="a hb" style="top:510.5px;width:447px;height:17.5px"></div>
<div class="a hb" style="top:534.5px;width:447px;height:17.5px"></div>
<div class="a hb" style="top:558.5px;width:447px;height:17.5px"></div>
<div class="a hb" style="top:582.5px;width:447px;height:17.5px"></div>
<div class="a hb" style="top:606.5px;width:447px;height:17.5px"></div>
<div class="a hb" style="top:630.5px;width:447px;height:17.5px"></div>
<div class="a hl" style="top:396.5px;width:407.5px;text-align:justify;text-align-last:justify;font-size:19.2px;line-height:22px">The second thing is related, but oh so important: the</div>
<div class="a hl" style="top:431.6px;width:246.5px;text-align:justify;text-align-last:justify;font-size:19.2px;line-height:22px">realization that it’s just so much</div>
<div class="a hl" style="top:459.0px;width:443px;text-align:justify;text-align-last:justify;font-size:19.2px;line-height:22px">easier to measure the impact of PPC, but it’s also so</div>
<div class="a hl" style="top:483.0px;width:443px;text-align:justify;text-align-last:justify;font-size:19.2px;line-height:22px">much more expensive in the long run. As an investor</div>
<div class="a hl" style="top:507.0px;width:443px;text-align:justify;text-align-last:justify;font-size:19.2px;line-height:22px">interested in long-term sustainable marketing—tactics, I</div>
<div class="a hl" style="top:531.0px;width:443px;text-align:justify;text-align-last:justify;font-size:19.2px;line-height:22px">keep pushing companies to not just do search</div>
<div class="a hl" style="top:555.0px;width:443px;text-align:justify;text-align-last:justify;font-size:19.2px;line-height:22px">marketing, but SEO specifically. This book will be</div>
<div class="a hl" style="top:579.0px;width:443px;text-align:justify;text-align-last:justify;font-size:19.2px;line-height:22px">among the things I’ll give to the companies we invest in,</div>
<div class="a hl" style="top:603.0px;width:443px;text-align:justify;text-align-last:justify;font-size:19.2px;line-height:22px">and if you buy it, it’ll help you build a good SEO</div>
<div class="a hl" style="top:627.0px;font-size:19.2px;line-height:22px">program for your website too.</div>

<!-- quote overlay -->
<div class="a" style="left:700px;top:511px;width:119px;text-align:right;white-space:nowrap;font-family:'Liberation Serif',serif;font-style:italic;font-size:12.4px;color:#2a3550;line-height:16px">—Joost de Valk</div>
<div class="a" style="left:700px;top:526px;width:119px;text-align:right;white-space:nowrap;font-family:'Liberation Serif',serif;font-style:italic;font-size:12.5px;color:#2a3550;line-height:16px">Founder, Yoast</div>
<!-- handles -->
<div class="a" style="left:369px;top:437.5px;width:4px;height:4px;background:#b197f2;border-radius:1px"></div>
<div class="a" style="left:821px;top:437.5px;width:4px;height:4px;background:#b197f2;border-radius:1px"></div>

<!-- format toolbar -->
<div class="a" style="left:409px;top:184px;width:376px;height:30px;border-radius:7px;background:#f8f8f8;box-shadow:0 1px 4px rgba(0,0,0,0.14),0 0 0 0.5px rgba(0,0,0,0.06)"></div>
<div class="a" style="left:418px;top:188px;width:46px;height:22px;border-radius:4px;background:#f1f1f1"></div>
<div class="a" style="left:422px;top:193px;font-size:11px;color:#333;line-height:13px">14</div>
<svg class="a" style="left:453px;top:196px" width="6" height="5"><path d="M0.5 1H5.5L3 4Z" fill="#333"/></svg>
<div class="a" style="left:473px;top:188px;width:91px;height:22px;border-radius:4px;background:#f1f1f1"></div>
<div class="a" style="left:477px;top:193px;width:75px;font-size:11px;color:#333;line-height:13px;white-space:nowrap;overflow:hidden">MeridienLTStd-Roman</div>
<div class="a" style="left:551px;top:193px;width:3px;height:13px;background:linear-gradient(90deg,rgba(241,241,241,0),#f1f1f1)"></div>
<svg class="a" style="left:555px;top:196px" width="6" height="5"><path d="M0.5 1H5.5L3 4Z" fill="#333"/></svg>
<div class="a" style="left:575px;top:193px;width:1px;height:12px;background:#e2e2e2"></div>
<div class="a" style="left:589.5px;top:190px;font-family:'Liberation Serif',serif;font-weight:bold;font-size:16px;color:#333;line-height:18px">B</div>
<div class="a" style="left:622.5px;top:190px;font-family:'Liberation Serif',serif;font-style:italic;font-size:16px;color:#333;line-height:18px">I</div>
<div class="a" style="left:649.5px;top:191px;font-family:'Liberation Serif',serif;font-size:14px;color:#333;line-height:16px;-webkit-text-stroke:0.3px #333">U</div>
<div class="a" style="left:650px;top:206px;width:11px;height:1.2px;background:#333"></div>
<div class="a" style="left:682px;top:191px;font-family:'Liberation Serif',serif;font-size:14px;color:#333;line-height:16px;-webkit-text-stroke:0.3px #333">S</div>
<div class="a" style="left:681px;top:198.3px;width:11px;height:1.2px;background:#333"></div>
<div class="a" style="left:707px;top:193px;width:1px;height:12px;background:#e2e2e2"></div>
<svg class="a" style="left:720px;top:192px" width="14" height="14" viewBox="0 0 14 14" fill="none" stroke="#333">
<path d="M2.5 1.5V12.5" stroke-width="1.8"/><path d="M5.5 3H12M5.5 7H10.5M5.5 11H12" stroke-width="1.2"/></svg>
<div class="a" style="left:746px;top:193px;width:1px;height:12px;background:#e2e2e2"></div>
<div class="a" style="left:758px;top:190.5px;width:17px;height:17px;border-radius:4px;background:conic-gradient(from 0deg,#ff5a5a,#ffb340,#ffe14a,#5ad65a,#4ab0ff,#9a6aff,#ff5aa8,#ff5a5a)"></div>
<div class="a" style="left:760px;top:192.5px;width:13px;height:13px;border-radius:2.5px;background:#e8102e"></div>
<svg class="a" style="left:763.5px;top:196px" width="6" height="5"><path d="M1 1.2 3 3.2 5 1.2" stroke="#fff" stroke-width="0.9" fill="none"/></svg>

<!-- zoom toolbar -->
<div class="a" style="left:424px;top:620px;width:348px;height:29px;border-radius:8px;background:#f6f6f6;box-shadow:0 1px 4px rgba(0,0,0,0.13),0 0 0 0.5px rgba(0,0,0,0.05)"></div>
<svg class="a" style="left:435px;top:627.5px" width="14" height="14" viewBox="0 0 14 14" fill="none" stroke="#666" stroke-width="0.9"><circle cx="7" cy="7" r="5.6"/><path d="M4.5 7H9.5"/></svg>
<div class="a" style="left:467px;top:628px;font-size:11px;color:#333;line-height:13px">146%</div>
<svg class="a" style="left:501px;top:632px" width="6" height="5"><path d="M0.5 1H5.5L3 4Z" fill="#333"/></svg>
<svg class="a" style="left:521px;top:627.5px" width="14" height="14" viewBox="0 0 14 14" fill="none" stroke="#666" stroke-width="0.9"><circle cx="7" cy="7" r="5.6"/><path d="M4.5 7H9.5M7 4.5V9.5"/></svg>
<div class="a" style="left:545px;top:629px;width:1px;height:11px;background:#d0d0d0"></div>
<svg class="a" style="left:556px;top:628px" width="13" height="13" viewBox="0 0 13 13" fill="none" stroke="#555" stroke-width="1"><path d="M3 3H10M3.5 8.5 6.5 5.5 9.5 8.5"/></svg>
<svg class="a" style="left:583px;top:628px" width="13" height="13" viewBox="0 0 13 13" fill="none" stroke="#555" stroke-width="1"><path d="M3.5 6.5 6.5 3.5 9.5 6.5M3.5 9.5 6.5 6.5 9.5 9.5"/></svg>
<div class="a" style="left:607px;top:623px;width:66px;height:23px;border-radius:5px;background:#fff"></div>
<div class="a" style="left:617px;top:628px;font-size:11px;color:#333;line-height:13px">30</div>
<div class="a" style="left:638px;top:628px;font-size:11px;color:#333;line-height:13px">/</div>
<div class="a" style="left:648.5px;top:628px;font-size:11px;color:#333;line-height:13px">775</div>
<svg class="a" style="left:684.5px;top:628px" width="13" height="13" viewBox="0 0 13 13" fill="none" stroke="#555" stroke-width="1"><path d="M3.5 3.5 6.5 6.5 9.5 3.5M3.5 6.5 6.5 9.5 9.5 6.5"/></svg>
<svg class="a" style="left:711.5px;top:628px" width="13" height="13" viewBox="0 0 13 13" fill="none" stroke="#555" stroke-width="1"><path d="M3.5 4 6.5 7 9.5 4M3 10H10"/></svg>
<div class="a" style="left:735px;top:629px;width:1px;height:11px;background:#d0d0d0"></div>
<svg class="a" style="left:746px;top:628.5px" width="12" height="12" viewBox="0 0 12 12" fill="none" stroke="#444" stroke-width="1"><path d="M2.5 2.5 9.5 9.5M9.5 2.5 2.5 9.5"/></svg>

<!-- right bar -->
<svg class="a" style="left:935px;top:77px" width="19" height="19" viewBox="0 0 19 19" fill="none" stroke="#333" stroke-width="1.3"><circle cx="8" cy="8" r="5.3"/><path d="M12 12 15.5 15.5" stroke-width="2" stroke-linecap="round"/><path d="M5.6 6.5A2.8 2.8 0 0 1 7 5.2" stroke-width="0.9"/></svg>
<div class="a sep" style="left:940px;top:110px;width:9px"></div>
<svg class="a" style="left:935px;top:125px" width="19" height="19" viewBox="0 0 19 19" fill="none" stroke="#333" stroke-width="1.1"><path d="M3.5 5.8V3.5A1.3 1.3 0 0 1 4.8 2.2H14.2A1.3 1.3 0 0 1 15.5 3.5V5.8M1.5 5.8H17.5M3.5 5.8V15.2A1.3 1.3 0 0 0 4.8 16.5H14.2A1.3 1.3 0 0 0 15.5 15.2V5.8"/><text x="9.5" y="13.8" font-family="Liberation Mono" font-size="5.2" font-weight="bold" text-anchor="middle" fill="#333" stroke="none">OCR</text></svg>
<svg class="a" style="left:935px;top:158px" width="19" height="19" viewBox="0 0 19 19" fill="none" stroke="#333" stroke-width="1.2"><path d="M5 2.5H11L14.5 6V16.5H5A0.5 0.5 0 0 1 4.5 16V3A0.5 0.5 0 0 1 5 2.5ZM11 2.5V6H14.5"/><path d="M7.3 10A2.4 2.4 0 0 1 11.6 9M11.7 11.3A2.4 2.4 0 0 1 7.4 12.3M11.6 7.6V9.2H10M7.4 13.6V12H9" stroke-width="1"/></svg>
<svg class="a" style="left:935px;top:192px" width="19" height="19" viewBox="0 0 19 19" fill="none" stroke="#333" stroke-width="1.2"><path d="M8 16.5H5A0.5 0.5 0 0 1 4.5 16V3A0.5 0.5 0 0 1 5 2.5H11L14.5 6V9M11 2.5V6H14.5"/><rect x="9.8" y="12" width="5.4" height="4.5" rx="0.8"/><path d="M11 12V10.8A1.5 1.5 0 0 1 14 10.8V12" stroke-width="1"/></svg>
<svg class="a" style="left:935px;top:226px" width="19" height="19" viewBox="0 0 19 19" fill="none" stroke="#333" stroke-width="1.2"><path d="M6.5 8H5A1 1 0 0 0 4 9V15.5A1 1 0 0 0 5 16.5H14A1 1 0 0 0 15 15.5V9A1 1 0 0 0 14 8H12.5"/><path d="M9.5 12V2.8M6.8 5.3 9.5 2.6 12.2 5.3"/></svg>
<svg class="a" style="left:935px;top:259.5px" width="19" height="19" viewBox="0 0 19 19" fill="none" stroke="#333" stroke-width="1.2"><rect x="3.5" y="4" width="12" height="11" rx="1.2"/><path d="M4 5.8 9.5 10 15 5.8"/></svg>
<div class="a sep" style="left:940px;top:292.5px;width:9px"></div>
<svg class="a" style="left:935px;top:306.5px" width="19" height="19" viewBox="0 0 19 19" fill="none" stroke="#333" stroke-width="1.2"><path d="M5 3H14A1 1 0 0 1 15 4V15A1 1 0 0 1 14 16H5A1 1 0 0 1 4 15V4A1 1 0 0 1 5 3Z"/><path d="M7 3V5.3H12V3"/><circle cx="9.5" cy="10.8" r="2"/></svg>
<div class="a sep" style="left:940px;top:340.5px;width:9px"></div>
<svg class="a" style="left:935px;top:354.5px" width="19" height="19" viewBox="0 0 19 19" fill="none" stroke="#333" stroke-width="1.2" stroke-linecap="round"><path d="M6.5 5.5 4 8 6.5 10.5"/><path d="M4.3 8H11.5A3.2 3.2 0 0 1 11.5 14.4H7"/></svg>
<svg class="a" style="left:935.5px;top:596px" width="18" height="18" viewBox="-9 -9 18 18" fill="none" stroke-width="1.7">
<path d="M0 -3.3A3.3 3.3 0 1 1 3.3 0" stroke="#42b6f2"/><path d="M3.3 0A3.3 3.3 0 1 1 0 3.3" stroke="#38cf7c"/><path d="M0 3.3A3.3 3.3 0 1 1 -3.3 0" stroke="#f7c234"/><path d="M-3.3 0A3.3 3.3 0 1 1 0 -3.3" stroke="#a06cf2"/></svg>
<svg class="a" style="left:935px;top:629px" width="19" height="19" viewBox="0 0 19 19" fill="none" stroke="#333" stroke-width="1.2"><path d="M4.8 3.5H14.2A1 1 0 0 1 15.2 4.5V12A1 1 0 0 1 14.2 13H11L9.5 14.8 8 13H4.8A1 1 0 0 1 3.8 12V4.5A1 1 0 0 1 4.8 3.5Z"/><path d="M6.3 7H12.7M6.3 9.5H10.5" stroke-width="1.3"/></svg>
<div class="a" style="left:59px;top:659px;width:906px;height:63px;background:#000"></div>
<script>
(function(){var els=document.querySelectorAll('.tt,.hl');for(var i=0;i<els.length;i++){var e=els[i];var cw=e.clientWidth,sw=e.scrollWidth;if(sw>cw+0.5){e.style.width=sw+'px';e.style.textAlignLast='left';e.style.transformOrigin='0 50%';e.style.transform='scaleX('+(cw/sw)+')';}}})();
</script>
</body></html>
